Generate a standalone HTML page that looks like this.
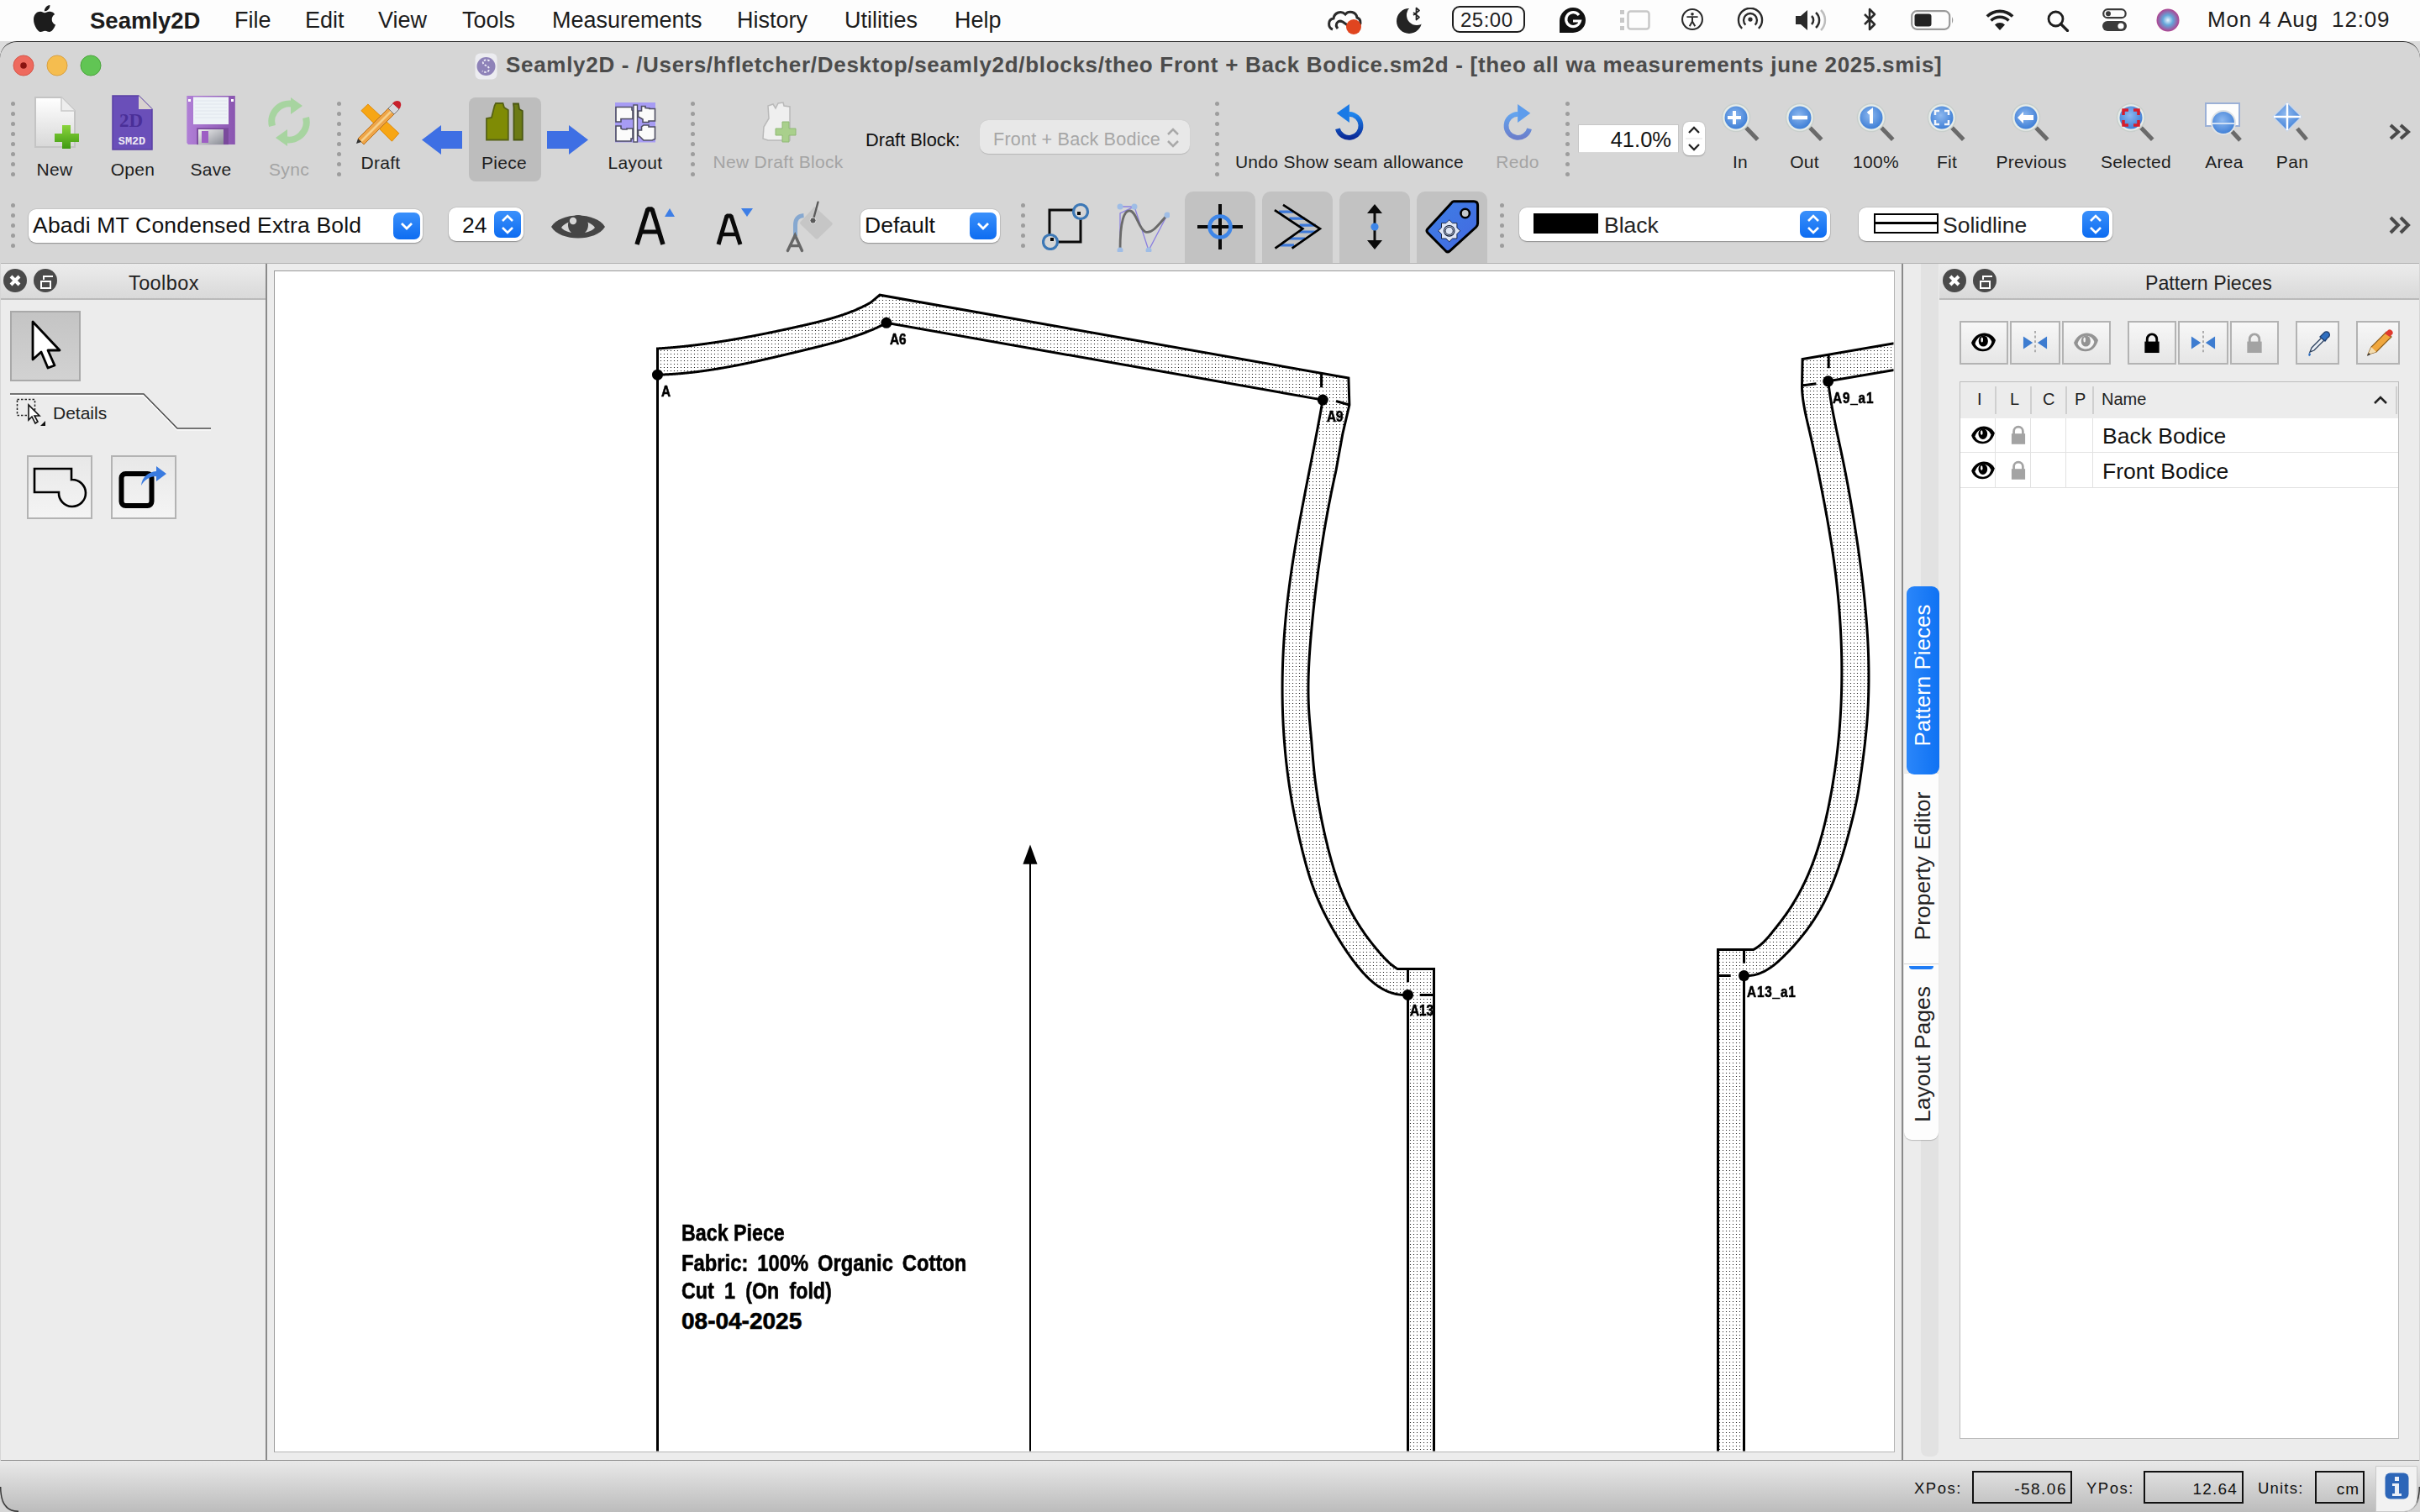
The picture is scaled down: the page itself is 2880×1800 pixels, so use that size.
<!DOCTYPE html>
<html><head><meta charset="utf-8">
<style>
*{box-sizing:border-box;margin:0;padding:0}
html,body{width:2880px;height:1800px;overflow:hidden;background:#dcdcdc;font-family:"Liberation Sans",sans-serif;color:#222;position:relative}
.a{position:absolute}
.t{position:absolute;white-space:nowrap;line-height:1}
.sep{position:absolute;width:5px}
.sep i{display:block;width:5px;height:5px;border-radius:50%;background:#9d9d9d;margin-bottom:7px}
.lbl{position:absolute;font-size:21px;color:#1e1e1e;white-space:nowrap;line-height:1;transform:translateX(-50%);letter-spacing:0.3px}
.combo{position:absolute;background:#fff;border-radius:9px;box-shadow:0 1px 1.5px rgba(0,0,0,.28),0 0 0 0.7px rgba(0,0,0,.10)}
.bbtn{position:absolute;border-radius:7px;background:linear-gradient(#3a90fb,#0d6cf1)}
.tog{position:absolute;background:#c2c2c2;border-radius:10px 10px 0 0}
.pbtn{position:absolute;border:2px solid #b3b3b3;background:linear-gradient(#f7f7f7,#e6e6e6)}
</style></head><body>
<!-- menubar -->
<div class="a" style="left:0;top:0;width:2880px;height:49px;background:#fdfdfd"></div>
<!-- window -->
<div class="a" style="left:0;top:49px;width:2880px;height:1751px;background:#d6d6d6;border-radius:20px 20px 0 0;border-top:1.5px solid #2a2a2a"></div>
<div class="a" style="left:1px;top:313px;width:2878px;height:1px;background:#b2b2b2"></div>
<div class="a" style="left:1px;top:314px;width:2878px;height:1424px;background:#ececec"></div>
<div class="a" style="left:1px;top:1738px;width:2878px;height:1px;background:#8e8e8e"></div>
<div class="a" style="left:0px;top:1739px;width:2880px;height:61px;background:linear-gradient(#e9e9e9,#bcbcbc);border-radius:0 0 20px 20px"></div>
<svg class="a" style="left:0;top:1770px" width="2880" height="30"><path d="M0.7 0 Q0.7 29.3 22 29.3" fill="none" stroke="#333" stroke-width="1.4"/><path d="M2879.3 0 Q2879.3 29.3 2858 29.3" fill="none" stroke="#333" stroke-width="1.4"/></svg>
<!-- menubar content -->
<svg class="a" style="left:40px;top:6px" width="26" height="32" viewBox="0 0 814 1000"><path fill="#1c1c1c" d="M788.1 340.9c-5.8 4.5-108.2 62.2-108.2 190.5 0 148.4 130.3 200.9 134.2 202.2-.6 3.200-20.7 71.9-68.7 141.9-42.8 61.6-87.5 123.1-155.5 123.1s-85.5-39.5-164-39.5c-76.5 0-103.7 40.8-165.9 40.8s-105.6-57-155.5-127C46.7 790.7 0 663 0 541.8c0-194.4 126.4-297.5 250.8-297.5 66.1 0 121.2 43.4 162.700 43.4 39.5 0 101.1-46 176.3-46 28.5 0 130.9 2.6 198.3 99.2zm-234-181.5c31.1-36.9 53.1-88.1 53.1-139.3 0-7.100-.6-14.3-1.9-20.1-50.6 1.9-110.8 33.7-147.1 75.8-28.5 32.4-55.1 83.6-55.1 135.5 0 7.8 1.3 15.6 1.9 18.1 3.2.6 8.4 1.3 13.6 1.3 45.4 0 102.5-30.4 135.5-71.3z"/></svg>
<div class="t" style="left:107px;top:10.5px;font-size:27.5px;font-weight:bold;color:#1c1c1c">Seamly2D</div>
<div class="t" style="left:279px;top:10.5px;font-size:27px;color:#1c1c1c">File</div>
<div class="t" style="left:363px;top:10.5px;font-size:27px;color:#1c1c1c">Edit</div>
<div class="t" style="left:450px;top:10.5px;font-size:27px;color:#1c1c1c">View</div>
<div class="t" style="left:550px;top:10.5px;font-size:27px;color:#1c1c1c">Tools</div>
<div class="t" style="left:657px;top:10.5px;font-size:27px;color:#1c1c1c">Measurements</div>
<div class="t" style="left:877px;top:10.5px;font-size:27px;color:#1c1c1c">History</div>
<div class="t" style="left:1005px;top:10.5px;font-size:27px;color:#1c1c1c">Utilities</div>
<div class="t" style="left:1136px;top:10.5px;font-size:27px;color:#1c1c1c">Help</div>
<!-- status icons -->
<svg class="a" style="left:1578px;top:7px" width="46" height="36" viewBox="0 0 46 36">
 <path d="M8 28 C2 26 2 16 9 15 C10 8 18 5 23 10 C27 5 36 7 37 14 C41 15 42 20 40 23" fill="none" stroke="#2a2a2a" stroke-width="3"/>
 <path d="M14 27 C10 22 14 16 20 19 L30 26" fill="none" stroke="#2a2a2a" stroke-width="3"/>
 <circle cx="33" cy="25" r="9" fill="#e0451f"/>
</svg>
<svg class="a" style="left:1661px;top:7px" width="34" height="34" viewBox="0 0 34 34">
 <defs><mask id="moonm"><rect width="34" height="34" fill="#fff"/><circle cx="25" cy="11" r="12" fill="#000"/></mask></defs>
 <circle cx="16" cy="18" r="15" fill="#242424" mask="url(#moonm)"/>
 <path d="M21 8 L28 13.5 L24.5 16.5 V2.5 L28 5.5 L21 11" fill="none" stroke="#242424" stroke-width="1.7" stroke-linejoin="round"/>
</svg>
<div class="a" style="left:1728px;top:7px;width:87px;height:32px;border:2px solid #1e1e1e;border-radius:9px"></div>
<div class="t" style="left:1738px;top:12px;font-size:24px;color:#1e1e1e;letter-spacing:0.5px">25:00</div>
<svg class="a" style="left:1855px;top:8px" width="34" height="32" viewBox="0 0 34 32">
 <path d="M17 1 A15 15 0 1 1 17 31 L1 31 L1 17 A16 16 0 0 1 17 1Z" fill="#111"/>
 <path d="M24 10 A8.5 8.5 0 1 0 25.5 17 H17" fill="none" stroke="#fff" stroke-width="3.2"/>
</svg>
<svg class="a" style="left:1928px;top:12px" width="36" height="24" viewBox="0 0 36 24">
 <rect x="0" y="0" width="5" height="5" fill="#c8c8c8"/><rect x="0" y="9" width="5" height="6" fill="#c8c8c8"/><rect x="0" y="19" width="5" height="5" fill="#c8c8c8"/>
 <rect x="9.5" y="1.5" width="25" height="21" rx="3" fill="none" stroke="#c8c8c8" stroke-width="2.5"/>
</svg>
<svg class="a" style="left:1997px;top:9px" width="34" height="28" viewBox="0 0 34 34">
 <circle cx="17" cy="17" r="14.5" fill="none" stroke="#2a2a2a" stroke-width="2.5"/>
 <circle cx="17" cy="9.5" r="2.2" fill="#2a2a2a"/>
 <path d="M9 13.5 L25 13.5 M17 13.5 V20 L13 27 M17 20 L21 27" fill="none" stroke="#2a2a2a" stroke-width="2.4"/>
</svg>
<svg class="a" style="left:2067px;top:9px" width="32" height="30" viewBox="0 0 32 32">
 <circle cx="16" cy="15" r="2.8" fill="#2a2a2a"/>
 <path d="M10 22 A8.5 8.5 0 1 1 22 22" fill="none" stroke="#2a2a2a" stroke-width="2.5"/>
 <path d="M5.5 26.5 A15 15 0 1 1 26.5 26.5" fill="none" stroke="#2a2a2a" stroke-width="2.5"/>
</svg>
<svg class="a" style="left:2136px;top:11px" width="40" height="26" viewBox="0 0 40 26">
 <path d="M1 8 H7 L15 1 V25 L7 18 H1 Z" fill="#2a2a2a"/>
 <path d="M20 8 A7 7 0 0 1 20 18" fill="none" stroke="#2a2a2a" stroke-width="2.5"/>
 <path d="M25 4 A12 12 0 0 1 25 22" fill="none" stroke="#2a2a2a" stroke-width="2.5"/>
 <path d="M31 1 A17 17 0 0 1 31 25" fill="none" stroke="#bdbdbd" stroke-width="2.5"/>
</svg>
<svg class="a" style="left:2216px;top:9px" width="19" height="30" viewBox="0 0 19 30">
 <path d="M3 8 L15 20 L9 26 V2 L15 8 L3 20" fill="none" stroke="#2a2a2a" stroke-width="2.5" stroke-linejoin="round"/>
</svg>
<svg class="a" style="left:2274px;top:12px" width="52" height="24" viewBox="0 0 52 24">
 <rect x="1.2" y="1.2" width="45" height="21.6" rx="6" fill="none" stroke="#9a9a9a" stroke-width="2.2"/>
 <rect x="4.5" y="4.5" width="20" height="15" rx="3" fill="#222"/>
 <path d="M49 8 Q51.5 12 49 16 Z" fill="#9a9a9a"/>
</svg>
<svg class="a" style="left:2363px;top:11px" width="34" height="26" viewBox="0 0 34 26">
 <path d="M17 25 L11 18.5 A8.5 8.5 0 0 1 23 18.5 Z" fill="#1e1e1e"/>
 <path d="M6.5 13.5 A15 15 0 0 1 27.5 13.5" fill="none" stroke="#1e1e1e" stroke-width="3.6"/>
 <path d="M1.8 8.5 A22 22 0 0 1 32.2 8.5" fill="none" stroke="#1e1e1e" stroke-width="3.6"/>
</svg>
<svg class="a" style="left:2436px;top:12px" width="27" height="26" viewBox="0 0 27 26">
 <circle cx="10.5" cy="10.5" r="8.5" fill="none" stroke="#1e1e1e" stroke-width="2.8"/>
 <path d="M16.5 16.5 L24.5 24.5" stroke="#1e1e1e" stroke-width="3.2" stroke-linecap="round"/>
</svg>
<svg class="a" style="left:2502px;top:10px" width="29" height="27" viewBox="0 0 29 27">
 <rect x="1.2" y="1.2" width="26.5" height="10" rx="5" fill="none" stroke="#3a3a3a" stroke-width="2.2"/>
 <circle cx="7" cy="6.2" r="3" fill="#3a3a3a"/>
 <rect x="0" y="15" width="29" height="12" rx="6" fill="#3a3a3a"/>
 <circle cx="22" cy="21" r="3.6" fill="#fff"/>
</svg>
<svg class="a" style="left:2566px;top:10px" width="28" height="28" viewBox="0 0 28 28">
 <defs><radialGradient id="siri" cx="50%" cy="50%" r="50%"><stop offset="0" stop-color="#e8f3ff"/><stop offset="0.45" stop-color="#63a6d9"/><stop offset="1" stop-color="#b0418f"/></radialGradient></defs>
 <circle cx="14" cy="14" r="13.5" fill="url(#siri)"/>
</svg>
<div class="t" style="left:2627px;top:10px;font-size:26px;color:#1c1c1c;letter-spacing:0.85px">Mon 4 Aug&nbsp;&nbsp;12:09</div>
<!-- title bar -->
<svg class="a" style="left:14px;top:64px" width="110" height="28" viewBox="0 0 110 28">
 <circle cx="14" cy="14" r="12" fill="#ee6a5e" stroke="#d65548" stroke-width="1"/>
 <circle cx="14" cy="14" r="3.8" fill="#8a1410"/>
 <circle cx="54" cy="14" r="12" fill="#f5bd4f" stroke="#d9a040" stroke-width="1"/>
 <circle cx="94" cy="14" r="12" fill="#61c554" stroke="#4aa43c" stroke-width="1"/>
</svg>
<svg class="a" style="left:565px;top:63px" width="27" height="32" viewBox="0 0 27 32">
 <rect x="0.5" y="0.5" width="26" height="31" rx="6" fill="#ececf0"/>
 <circle cx="13.5" cy="16" r="11" fill="#8e82b8"/>
 <path d="M17.5 9.5 C14 7 8.5 9 10 12.5 C11.5 15.5 17 15 17 19.5 C17 23 11.5 24 9 21.5" fill="none" stroke="#f0eef8" stroke-width="1.8" stroke-dasharray="2.5 1.8"/>
</svg>
<div class="t" style="left:602px;top:64px;font-size:26px;font-weight:bold;color:#4b4b4b;letter-spacing:0.7px">Seamly2D - /Users/hfletcher/Desktop/seamly2d/blocks/theo Front + Back Bodice.sm2d - [theo all wa measurements june 2025.smis]</div>
<!-- toolbar row 1 -->
<svg width="0" height="0" style="position:absolute">
 <defs>
  <radialGradient id="lensg" cx="45%" cy="40%" r="60%"><stop offset="0" stop-color="#8db8ef"/><stop offset="1" stop-color="#3f7fd6"/></radialGradient>
  <linearGradient id="docg" x1="0" y1="0" x2="0" y2="1"><stop offset="0" stop-color="#ffffff"/><stop offset="1" stop-color="#d8d8d8"/></linearGradient>
  <linearGradient id="greeng" x1="0" y1="0" x2="0" y2="1"><stop offset="0" stop-color="#8ad43c"/><stop offset="1" stop-color="#3f9a12"/></linearGradient>
  <symbol id="mag" viewBox="0 0 50 50">
   <path d="M30 30 L42 42.5" stroke="#6a6a6a" stroke-width="5" stroke-linecap="square"/>
   <circle cx="18" cy="18" r="16.5" fill="#e6ece9" stroke="#c9cfcc" stroke-width="1.5"/>
   <circle cx="18" cy="18" r="13.5" fill="url(#lensg)"/>
  </symbol>
 </defs>
</svg>
<div class="sep" style="left:13px;top:121px"><i></i><i></i><i></i><i></i><i></i><i></i><i></i><i></i></div>
<svg class="a" style="left:40px;top:114px" width="56" height="64" viewBox="0 0 56 64">
 <path d="M2 2 H33 L49 18 V61 H2 Z" fill="url(#docg)" stroke="#c4c4c4" stroke-width="2"/>
 <path d="M33 2 V18 H49" fill="#eee" stroke="#c9c9c9" stroke-width="1.5"/>
 <path d="M34 35 H44 V45 H54 V55 H44 V63 H34 V55 H25 V45 H34 Z" fill="url(#greeng)"/>
</svg>
<div class="lbl" style="left:65px;top:190.5px">New</div>
<svg class="a" style="left:133px;top:113px" width="50" height="66" viewBox="0 0 50 66">
 <path d="M1 1 H32 L48 17 V65 H1 Z" fill="#6a4fb9" stroke="#5a40a4" stroke-width="1.5"/>
 <path d="M32 1 L48 17 H32 Z" fill="#d9d2cf"/>
 <text x="23" y="38" font-family="Liberation Serif" font-weight="bold" font-size="23" fill="#4a2f98" text-anchor="middle">2D</text>
 <text x="24" y="59" font-family="Liberation Mono" font-weight="bold" font-size="13.5" fill="#ece8f4" text-anchor="middle">SM2D</text>
</svg>
<div class="lbl" style="left:158px;top:190.5px">Open</div>
<svg class="a" style="left:215px;top:108px" width="70" height="70" viewBox="215 108 70 70">
 <defs><linearGradient id="saveg" x1="0" y1="0" x2="1" y2="0"><stop offset="0" stop-color="#b07fd6"/><stop offset="1" stop-color="#8a55b0"/></linearGradient>
 <linearGradient id="metalg" x1="0" y1="0" x2="1" y2="1"><stop offset="0" stop-color="#f0f0f0"/><stop offset="1" stop-color="#8a8d96"/></linearGradient></defs>
 <path d="M222.3 114 H279.8 V172.1 H224 L222.3 170 Z" fill="url(#saveg)"/>
 <rect x="230" y="115.5" width="42" height="32.5" fill="#eef3f7"/>
 <path d="M232 120 H270 M232 124 H270 M232 128 H270 M232 132 H270 M232 136 H270 M232 140 H270" stroke="#dfe6ee" stroke-width="1.2"/>
 <rect x="234.2" y="152.3" width="37.7" height="19.8" fill="#7a4a9c"/>
 <rect x="236" y="154" width="30" height="18" fill="url(#metalg)"/>
 <rect x="240" y="156" width="8" height="14" fill="#9d5ec4"/>
 <rect x="224" y="118" width="3" height="3" fill="#fff"/><rect x="275" y="118" width="3" height="3" fill="#fff"/>
</svg>
<div class="lbl" style="left:251px;top:190.5px">Save</div>
<svg class="a" style="left:316px;top:114px" width="56" height="62" viewBox="0 0 56 62">
 <path d="M8 36 A21 21 0 0 1 36 11" fill="none" stroke="#a7d4a0" stroke-width="8"/>
 <path d="M30 2 L44 12 L30 22 Z" fill="#a7d4a0"/>
 <path d="M48 26 A21 21 0 0 1 20 51" fill="none" stroke="#a7d4a0" stroke-width="8"/>
 <path d="M26 40 L12 50 L26 60 Z" fill="#a7d4a0"/>
</svg>
<div class="lbl" style="left:344px;top:190.5px;color:#a4a4a4">Sync</div>
<div class="sep" style="left:401px;top:121px"><i></i><i></i><i></i><i></i><i></i><i></i><i></i><i></i></div>
<svg class="a" style="left:420px;top:115px" width="70" height="60" viewBox="420 115 70 60">
 <path d="M429.9 131.7 L437.9 124.1 L474.8 158.7 L466.4 168.2 Z" fill="#f7a614" stroke="#e08a0a" stroke-width="1"/>
 <path d="M426 165 L464 127 L471 134 L433 172 Z" fill="#eea447" stroke="#b8731f" stroke-width="1"/>
 <path d="M430 168 L467 131" stroke="#f8d08a" stroke-width="2.5"/>
 <path d="M462 129 L468 123 L475 130 L469 136 Z" fill="#d8d8dc" stroke="#777" stroke-width="1"/>
 <path d="M467 123 Q471 118 476 121 Q479 125 475 130 Z" fill="#c8202c"/>
 <path d="M426 165 L424 171 L430 169 Z" fill="#333"/>
</svg>
<div class="lbl" style="left:453px;top:182.5px">Draft</div>
<svg class="a" style="left:502px;top:149px" width="49" height="35" viewBox="0 0 49 35">
 <path d="M0 17.5 L23 0 V7 H48 V28 H23 V35 Z" fill="#3e6fe4"/>
</svg>
<div class="a" style="left:558px;top:116px;width:86px;height:100px;background:#bdbdbd;border-radius:8px"></div>
<svg class="a" style="left:570px;top:115px" width="65" height="60" viewBox="570 115 65 60">
 <path d="M579 166.5 V141 L585 140 L588.5 126 L590 123 H598.5 L600 128 L604.8 131 V166.5 Z" fill="#7f8b05" stroke="#566215" stroke-width="1.8"/>
 <path d="M611.5 166.5 V128 L611 123.5 H617 L618 130 L621.8 132 V166.5 Z" fill="#6b7a15" stroke="#4a5712" stroke-width="1.8"/>
</svg>
<div class="lbl" style="left:600px;top:182.5px">Piece</div>
<svg class="a" style="left:651px;top:149px" width="49" height="35" viewBox="0 0 49 35">
 <path d="M49 17.5 L26 0 V7 H0 V28 H26 V35 Z" fill="#3e6fe4"/>
</svg>
<svg class="a" style="left:725px;top:115px" width="65" height="60" viewBox="725 115 65 60">
 <rect x="732" y="122" width="48" height="47.5" fill="#a79cf4"/>
 <path d="M733 127.5 H752 V131 L753 132 V141.5 H739 V145 H733 Z" fill="#fbfbfb" stroke="#4f4f62" stroke-width="1.6"/>
 <path d="M733 150 H739 V153 L741 154 H746 V153 H753 V165 H751 V168 H733 Z" fill="#fbfbfb" stroke="#4f4f62" stroke-width="1.6"/>
 <rect x="754" y="125" width="4.5" height="44" fill="#fbfbfb" stroke="#4f4f62" stroke-width="1.4"/>
 <path d="M759.5 132 H763.5 V126.5 H768 V128.5 L773 129 V129.5 H779.5 V144 H772 V145.5 H765 V142 L761.5 140 L759.5 139 Z" fill="#fbfbfb" stroke="#4f4f62" stroke-width="1.6"/>
 <path d="M759.5 155 H763.5 V151 L766 149 H772 V151 H779.5 V165.5 L776 167 H766 L762 163 L759.5 161 Z" fill="#fbfbfb" stroke="#4f4f62" stroke-width="1.6"/>
</svg>
<div class="lbl" style="left:756px;top:182.5px">Layout</div>
<div class="sep" style="left:822px;top:121px"><i></i><i></i><i></i><i></i><i></i><i></i><i></i><i></i></div>
<svg class="a" style="left:906px;top:121px" width="46" height="50" viewBox="0 0 46 50">
 <path d="M8 46 L2 44 L3 30 L9 20 L8 5 L14 3 L17 8 L20 2 L26 1 L27 5 L34 6 L34 46 Z" fill="#efefef" stroke="#b9b9b9" stroke-width="1.5"/>
 <path d="M25 24 H33 V32 H41 V40 H33 V48 H25 V40 H17 V32 H25 Z" fill="#a9d08c" stroke="#8fb874" stroke-width="1"/>
</svg>
<div class="lbl" style="left:926px;top:182px;color:#a4a4a4">New Draft Block</div>
<div class="t" style="left:1030px;top:156px;font-size:21.8px;color:#111">Draft Block:</div>
<div class="a" style="left:1166px;top:143px;width:250px;height:40px;background:#e8e8e8;border-radius:10px;box-shadow:0 0.5px 1px rgba(0,0,0,.15)"></div>
<div class="t" style="left:1182px;top:155px;font-size:21.6px;color:#a6a6a6;letter-spacing:0.2px">Front + Back Bodice</div>
<svg class="a" style="left:1388px;top:151px" width="16" height="26" viewBox="0 0 16 26"><path d="M2 9 L8 3 L14 9 M2 17 L8 23 L14 17" fill="none" stroke="#a9a9a9" stroke-width="2.5"/></svg>
<div class="sep" style="left:1446px;top:121px"><i></i><i></i><i></i><i></i><i></i><i></i><i></i><i></i></div>
<svg class="a" style="left:1586px;top:123px" width="40" height="46" viewBox="0 0 40 46">
 <defs><linearGradient id="undog" x1="0" y1="0" x2="0" y2="1"><stop offset="0" stop-color="#1f86ee"/><stop offset="1" stop-color="#0a2a98"/></linearGradient></defs>
 <path d="M19.7 12.8 A14 14 0 1 1 5.9 30.2" fill="none" stroke="url(#undog)" stroke-width="5.8"/>
 <path d="M4.7 11.8 L19.9 1 V22.9 Z" fill="#1a7ae6"/>
</svg>
<div class="lbl" style="left:1606px;top:182px">Undo Show seam allowance</div>
<svg class="a" style="left:1786px;top:123px" width="40" height="46" viewBox="0 0 40 46">
 <defs><linearGradient id="redog" x1="0" y1="0" x2="0" y2="1"><stop offset="0" stop-color="#64a4ee"/><stop offset="1" stop-color="#6b7fcc"/></linearGradient></defs>
 <path d="M20.3 12.8 A14 14 0 1 0 34.1 30.2" fill="none" stroke="url(#redog)" stroke-width="5.8"/>
 <path d="M35.3 11.8 L20.1 1 V22.9 Z" fill="#5d9cec"/>
</svg>
<div class="lbl" style="left:1806px;top:182px;color:#a4a4a4">Redo</div>
<div class="sep" style="left:1863px;top:121px"><i></i><i></i><i></i><i></i><i></i><i></i><i></i><i></i></div>
<div class="a" style="left:1878px;top:148px;width:120px;height:34px;background:#fff;border:1px solid #c6c6c6;border-bottom-color:#d9d9d9"></div>
<div class="t" style="left:1890px;top:154px;width:99px;text-align:right;font-size:25.5px;color:#111">41.0%</div>
<div class="a" style="left:2003px;top:145px;width:26px;height:40px;background:#fff;border-radius:7px;box-shadow:0 0.5px 1.5px rgba(0,0,0,.3)"></div>
<svg class="a" style="left:2003px;top:145px" width="26" height="40" viewBox="0 0 26 40"><path d="M7 13 L13 7 L19 13 M7 27 L13 33 L19 27" fill="none" stroke="#222" stroke-width="2.3"/><path d="M3 20 H23" stroke="#e3e3e3" stroke-width="1"/></svg>
<!-- magnifiers -->
<svg class="a" style="left:2048px;top:122px" width="50" height="50"><use href="#mag"/><path d="M16 10 V26 M8 18 H24" stroke="#fff" stroke-width="4"/></svg>
<div class="lbl" style="left:2071px;top:181.5px">In</div>
<svg class="a" style="left:2124px;top:122px" width="50" height="50"><use href="#mag"/><path d="M9 18 H27" stroke="#fff" stroke-width="4.5"/></svg>
<div class="lbl" style="left:2147.5px;top:181.5px">Out</div>
<svg class="a" style="left:2209px;top:122px" width="50" height="50"><use href="#mag"/><path d="M14 13 L18 10 V25" fill="none" stroke="#fff" stroke-width="4"/></svg>
<div class="lbl" style="left:2232.5px;top:181.5px">100%</div>
<svg class="a" style="left:2293px;top:122px" width="50" height="50"><use href="#mag"/><path d="M10 15 V10 H15 M21 10 H26 V15 M26 21 V26 H21 M15 26 H10 V21" fill="none" stroke="#f4f7fb" stroke-width="2.5"/></svg>
<div class="lbl" style="left:2317px;top:181.5px">Fit</div>
<svg class="a" style="left:2393px;top:122px" width="50" height="50"><use href="#mag"/><path d="M8 18 L15 11 V15 H27 V21 H15 V25 Z" fill="#fff"/></svg>
<div class="lbl" style="left:2417.5px;top:181.5px">Previous</div>
<svg class="a" style="left:2518px;top:122px" width="50" height="50"><use href="#mag"/><path d="M9 15 V9 H15 M21 9 H27 V15 M27 21 V27 H21 M15 27 H9 V21" fill="none" stroke="#d81c2a" stroke-width="3.5"/></svg>
<div class="lbl" style="left:2542px;top:181.5px">Selected</div>
<svg class="a" style="left:2622px;top:120px" width="50" height="54" viewBox="0 0 50 54">
 <rect x="3" y="3" width="40" height="27" fill="#fdfdfd" stroke="#9bb0d6" stroke-width="2"/>
 <path d="M33 35 L44 47" stroke="#6a6a6a" stroke-width="5"/>
 <circle cx="24" cy="26" r="14" fill="url(#lensg)" stroke="#dfe3e6" stroke-width="2"/>
 <path d="M11 27 H37" stroke="#cfe0f6" stroke-width="2"/>
</svg>
<div class="lbl" style="left:2647px;top:181.5px">Area</div>
<svg class="a" style="left:2700px;top:120px" width="52" height="54" viewBox="0 0 52 54">
 <path d="M34 33 L45 46" stroke="#6a6a6a" stroke-width="5"/>
 <path d="M22 2 L39 19 L22 36 L5 19 Z" fill="url(#lensg)" stroke="#c8d6ea" stroke-width="1.5"/>
 <path d="M22 3 V35 M6 19 H38" stroke="#fff" stroke-width="2.5"/>
</svg>
<div class="lbl" style="left:2728px;top:181.5px">Pan</div>
<svg class="a" style="left:2843px;top:147px" width="30" height="20" viewBox="0 0 30 20"><path d="M2 2 L11 10 L2 18 M14 2 L23 10 L14 18" fill="none" stroke="#4a4a4a" stroke-width="4"/></svg>
<!-- toolbar row 2 -->
<div class="sep" style="left:13px;top:242px"><i></i><i></i><i></i><i></i><i></i></div>
<div class="combo" style="left:34px;top:249px;width:469px;height:40px"></div>
<div class="t" style="left:39px;top:255px;font-size:26.5px;color:#111;letter-spacing:0.2px">Abadi MT Condensed Extra Bold</div>
<div class="bbtn" style="left:468px;top:253px;width:32px;height:32px"></div>
<svg class="a" style="left:468px;top:253px" width="32" height="32" viewBox="0 0 32 32"><path d="M10 13 L16 19 L22 13" fill="none" stroke="#fff" stroke-width="2.8"/></svg>
<div class="combo" style="left:534px;top:247px;width:89px;height:40px"></div>
<div class="t" style="left:550px;top:255px;font-size:26.5px;color:#111">24</div>
<div class="bbtn" style="left:588px;top:251px;width:32px;height:32px"></div>
<svg class="a" style="left:588px;top:251px" width="32" height="32" viewBox="0 0 32 32"><path d="M10 12 L16 6 L22 12 M10 20 L16 26 L22 20" fill="none" stroke="#fff" stroke-width="2.6"/></svg>
<svg class="a" style="left:655px;top:249px" width="66" height="42" viewBox="0 0 66 42">
 <path d="M1 21 C12 3 54 3 65 21 C54 39 12 39 1 21 Z" fill="#454545"/>
 <path d="M13 22 C20 11 46 11 53 22 C46 31 20 31 13 22Z" fill="#d6d6d6"/>
 <circle cx="33" cy="19" r="12" fill="#454545"/>
 <circle cx="27" cy="14" r="4.2" fill="#d6d6d6"/>
</svg>
<svg class="a" style="left:754px;top:246px" width="52" height="48" viewBox="0 0 52 48">
 <path d="M4 45 L17 3 H22 L35 45" fill="none" stroke="#0a0a0a" stroke-width="5.5" stroke-linejoin="bevel"/>
 <path d="M9 30 H30" stroke="#0a0a0a" stroke-width="5"/>
 <path d="M37 12 L43 2 L49 12 Z" fill="#3d7ee6"/>
</svg>
<svg class="a" style="left:852px;top:245px" width="48" height="49" viewBox="0 0 48 49">
 <path d="M3 46 L13 12 H18 L29 46" fill="none" stroke="#0a0a0a" stroke-width="5" stroke-linejoin="bevel"/>
 <path d="M7 34 H25" stroke="#0a0a0a" stroke-width="4.5"/>
 <path d="M30 3 H44 L37 13 Z" fill="#3d7ee6"/>
</svg>
<svg class="a" style="left:930px;top:236px" width="70" height="70" viewBox="930 236 70 70">
 <path d="M968.4 247 Q968.4 245.3 970 246.5 L990 265 Q991.6 266.6 990 268 L973.5 284 Q972.1 285.5 970.5 284 L952.8 267 Q951.3 265.6 952.8 264 Z" fill="#c6c6c6"/>
 <path d="M956.5 256.5 C950 257 946.5 260 946.5 268 V281" fill="none" stroke="#86a8d0" stroke-width="5"/>
 <path d="M973.5 240.6 L967.5 262.9" stroke="#5a5a5a" stroke-width="2.3" stroke-linecap="round"/>
 <circle cx="967.5" cy="262.5" r="3.6" fill="#5a5a5a" stroke="#e4e4e4" stroke-width="1"/>
 <path d="M937.4 298.5 L946.2 280 L954.5 298.5 M940.5 292.6 H951.5" fill="none" stroke="#676767" stroke-width="3.4" stroke-linecap="round"/>
</svg>
<div class="combo" style="left:1024px;top:249px;width:166px;height:40px"></div>
<div class="t" style="left:1029px;top:255px;font-size:26.5px;color:#111">Default</div>
<div class="bbtn" style="left:1154px;top:253px;width:32px;height:32px"></div>
<svg class="a" style="left:1154px;top:253px" width="32" height="32" viewBox="0 0 32 32"><path d="M10 13 L16 19 L22 13" fill="none" stroke="#fff" stroke-width="2.8"/></svg>
<div class="sep" style="left:1215px;top:242px"><i></i><i></i><i></i><i></i><i></i></div>
<svg class="a" style="left:1240px;top:242px" width="58" height="56" viewBox="0 0 58 56">
 <path d="M9 47 V8 H46 V46 H10" fill="none" stroke="#0a0a0a" stroke-width="3"/>
 <circle cx="46" cy="10" r="8.5" fill="#d6d6d6" stroke="#3d78b6" stroke-width="3.2"/>
 <circle cx="10" cy="46" r="8.5" fill="#d6d6d6" stroke="#3d78b6" stroke-width="3.2"/>
 <rect x="42" y="10" width="4" height="4" fill="#0a0a0a"/><rect x="10" y="41" width="4" height="4" fill="#0a0a0a"/>
</svg>
<svg class="a" style="left:1328px;top:242px" width="64" height="58" viewBox="0 0 64 58">
 <path d="M5 56 V12 L22 4 L39 56 L61 14" fill="none" stroke="#8a7fe0" stroke-width="1.3"/>
 <path d="M5 4 H22" stroke="#8a7fe0" stroke-width="1.5"/>
 <path d="M5 56 C5 20 10 8 17 9 C24 10 27 30 35 34 C43 37 51 25 61 14" fill="none" stroke="#6a6a6a" stroke-width="2.8"/>
 <circle cx="5" cy="4" r="3.5" fill="#9fbde6"/><circle cx="22" cy="4" r="3.5" fill="#9fbde6"/>
 <circle cx="5" cy="56" r="3.5" fill="#9fbde6"/><circle cx="39" cy="56" r="3.5" fill="#9fbde6"/><circle cx="61" cy="14" r="3.5" fill="#9fbde6"/>
</svg>
<div class="tog" style="left:1410px;top:228px;width:84px;height:85px"></div>
<div class="tog" style="left:1502px;top:228px;width:84px;height:85px"></div>
<div class="tog" style="left:1594px;top:228px;width:84px;height:85px"></div>
<div class="tog" style="left:1686px;top:228px;width:84px;height:85px"></div>
<svg class="a" style="left:1422px;top:240px" width="60" height="60" viewBox="0 0 60 60">
 <path d="M30 3 V57 M3 30 H57" stroke="#0a0a0a" stroke-width="4"/>
 <circle cx="30" cy="30" r="12.5" fill="none" stroke="#3e86e8" stroke-width="4.5"/>
</svg>
<svg class="a" style="left:1500px;top:230px" width="90" height="80" viewBox="1500 230 90 80">
 <path d="M1522 252.2 H1539 M1534.5 260.2 H1553 M1546.5 268.1 H1566 M1546 276 H1566 M1534 284 H1553 M1523 291.9 H1540" stroke="#3d78d8" stroke-width="3.2"/>
 <path d="M1516.9 250.1 L1550.3 272.3 L1517.5 295.6" fill="none" stroke="#000" stroke-width="2.7"/>
 <path d="M1527 243.8 L1570.9 272.3 L1537.6 295.6" fill="none" stroke="#000" stroke-width="2.7"/>
</svg>
<svg class="a" style="left:1622px;top:241px" width="28" height="58" viewBox="0 0 28 58">
 <path d="M14 8 V50" stroke="#0a0a0a" stroke-width="3"/>
 <path d="M5 13 L14 2 L23 13 Z M5 45 L14 56 L23 45 Z" fill="#0a0a0a"/>
 <circle cx="14" cy="29" r="4.6" fill="#3e86e8"/>
</svg>
<svg class="a" style="left:1686px;top:226px" width="104" height="90" viewBox="1686 226 104 90">
 <defs><linearGradient id="tagg" x1="0" y1="0" x2="1" y2="1"><stop offset="0" stop-color="#3d7fe6"/><stop offset="1" stop-color="#4468e0"/></linearGradient></defs>
 <path d="M1730 239.7 L1754 239.7 Q1758.6 239.7 1758.6 244.5 L1758.6 266 Q1758.6 268.5 1756.5 270.5 L1725 299 Q1722.9 300.8 1720.8 299 L1699 277 Q1697 274.8 1699 272.6 L1727 242 Q1728.5 239.7 1730 239.7 Z" fill="url(#tagg)" stroke="#000" stroke-width="3"/>
 <circle cx="1743.7" cy="254" r="5.2" fill="#c4c8cc" stroke="#000" stroke-width="2.6"/>
 <path d="M1724.7 261.8 L1728.5 265.6 L1733.9 265.6 L1733.9 271.0 L1737.7 274.8 L1733.9 278.6 L1733.9 284.0 L1728.5 284.0 L1724.7 287.8 L1720.9 284.0 L1715.5 284.0 L1715.5 278.6 L1711.7 274.8 L1715.5 271.0 L1715.5 265.6 L1720.9 265.6 Z" fill="#dfe6f6" stroke="#0d1a35" stroke-width="0.9" stroke-linejoin="round"/>
 <circle cx="1724.7" cy="274.8" r="6.3" fill="none" stroke="#0d1a35" stroke-width="1.1"/>
 <circle cx="1724.7" cy="274.8" r="4.6" fill="#dfe6f6" stroke="#0d1a35" stroke-width="1"/>
</svg>
<div class="sep" style="left:1785px;top:242px"><i></i><i></i><i></i><i></i><i></i></div>
<div class="combo" style="left:1808px;top:247px;width:370px;height:40px"></div>
<div class="a" style="left:1825px;top:254px;width:77px;height:24px;background:#000"></div>
<div class="t" style="left:1909px;top:255px;font-size:26.5px;color:#222">Black</div>
<div class="bbtn" style="left:2142px;top:251px;width:32px;height:32px"></div>
<svg class="a" style="left:2142px;top:251px" width="32" height="32" viewBox="0 0 32 32"><path d="M10 12 L16 6 L22 12 M10 20 L16 26 L22 20" fill="none" stroke="#fff" stroke-width="2.6"/></svg>
<div class="combo" style="left:2212px;top:247px;width:302px;height:40px"></div>
<div class="a" style="left:2230px;top:254px;width:77px;height:24px;border:2px solid #000;background:#fff"></div>
<div class="a" style="left:2230px;top:264px;width:77px;height:3px;background:#000"></div>
<div class="t" style="left:2312px;top:255px;font-size:26.5px;color:#222">Solidline</div>
<div class="bbtn" style="left:2478px;top:251px;width:32px;height:32px"></div>
<svg class="a" style="left:2478px;top:251px" width="32" height="32" viewBox="0 0 32 32"><path d="M10 12 L16 6 L22 12 M10 20 L16 26 L22 20" fill="none" stroke="#fff" stroke-width="2.6"/></svg>
<svg class="a" style="left:2843px;top:257px" width="30" height="22" viewBox="0 0 30 22"><path d="M2 2 L11 11 L2 20 M14 2 L23 11 L14 20" fill="none" stroke="#4a4a4a" stroke-width="4"/></svg>
<!-- left toolbox -->
<div class="a" style="left:1px;top:314px;width:315px;height:43px;background:linear-gradient(#ececec,#d9d9d9);border-bottom:2.5px solid #bababa"></div>
<svg class="a" style="left:3px;top:319px" width="68" height="30" viewBox="0 0 68 30">
 <circle cx="15" cy="15" r="14" fill="#4a4a4a"/>
 <path d="M10 10 L20 20 M20 10 L10 20" stroke="#fff" stroke-width="4"/>
 <circle cx="51" cy="15" r="14" fill="#4a4a4a"/>
 <rect x="46" y="16" width="11" height="8" fill="none" stroke="#fff" stroke-width="2"/>
 <path d="M49 14 V10 H60" fill="none" stroke="#fff" stroke-width="2"/>
</svg>
<div class="t" style="left:153px;top:326px;font-size:23.5px;color:#222;letter-spacing:0.4px">Toolbox</div>
<div class="a" style="left:316px;top:314px;width:2px;height:1424px;background:#8a8a8a"></div>
<div class="a" style="left:12px;top:370px;width:84px;height:84px;border:2px solid #a9a9a9;background:linear-gradient(#c4c4c4,#d2d2d2)"></div>
<svg class="a" style="left:36px;top:380px" width="40" height="62" viewBox="0 0 40 62">
 <path d="M3 3 V48 L13 39 L21 58 L29 55 L21 37 L35 37 Z" fill="#fff" stroke="#000" stroke-width="2.8" stroke-linejoin="round"/>
</svg>
<svg class="a" style="left:10px;top:462px" width="245" height="52" viewBox="0 0 245 52">
 <path d="M2 7 H161 L201 48 H241" fill="none" stroke="#fff" stroke-width="2" transform="translate(0,1.5)"/>
 <path d="M2 7 H161 L201 48 H241" fill="none" stroke="#4a4a4a" stroke-width="1.5"/>
</svg>
<svg class="a" style="left:19px;top:474px" width="36" height="34" viewBox="0 0 36 34">
 <rect x="1.5" y="1.5" width="21" height="19" fill="none" stroke="#222" stroke-width="1.5" stroke-dasharray="2.5 2"/>
 <path d="M15 8 V26 L19 22 L23 30 L26 28 L22 21 L28 21 Z" fill="#fff" stroke="#111" stroke-width="1.6"/>
 <path d="M29 33 L35 27 V33 Z" fill="#111"/>
</svg>
<div class="t" style="left:63px;top:481px;font-size:21px;color:#222">Details</div>
<div class="a" style="left:32px;top:542px;width:78px;height:76px;border:2px solid #b3b3b3;background:linear-gradient(#e8e8e8,#f4f4f4)"></div>
<svg class="a" style="left:32px;top:542px" width="78" height="76" viewBox="0 0 78 76">
 <path d="M9 16 H53 V29 A16 16 0 1 1 38 44 H9 Z" fill="none" stroke="#000" stroke-width="2.6"/>
</svg>
<div class="a" style="left:132px;top:542px;width:78px;height:76px;border:2px solid #b3b3b3;background:linear-gradient(#e8e8e8,#f4f4f4)"></div>
<svg class="a" style="left:132px;top:542px" width="78" height="76" viewBox="0 0 78 76">
 <rect x="12.5" y="22" width="36" height="38" rx="5" fill="none" stroke="#000" stroke-width="6"/>
 <path d="M36 36 C37 26 44 20 54 19 V13 L66 22 L54 31 V25 C46 25 40 29 36 36 Z" fill="#3a7be0"/>
</svg>
<!-- canvas frame -->
<div class="a" style="left:326px;top:322px;width:1929px;height:1407px;background:#fff;border:1.5px solid #9a9a9a;border-right-color:#b5b5b5;border-bottom-color:#b5b5b5"></div>
<!-- right side splitter + tabs -->
<div class="a" style="left:2263px;top:314px;width:2px;height:1424px;background:#8a8a8a"></div>
<div class="a" style="left:2286px;top:314px;width:21px;height:1420px;background:#e2e2e2;border-radius:0 0 8px 8px"></div>
<div class="a" style="left:2266px;top:921px;width:41px;height:436px;background:#fdfdfd;border-radius:0 0 9px 9px;box-shadow:0 0.5px 1px rgba(0,0,0,.2)"></div>
<div class="a" style="left:2269px;top:698px;width:39px;height:224px;background:linear-gradient(90deg,#2a86fa,#0f72f3);border-radius:9px"></div>
<div class="a" style="left:2266px;top:1147px;width:41px;height:1px;background:#d4d4d4"></div>
<div class="a" style="left:2272px;top:1150px;width:29px;height:4px;background:#1f7cf5;border-radius:0 0 4px 4px"></div>
<div class="t" style="left:2288px;top:804px;font-size:26px;color:#fff;transform:translate(-50%,-50%) rotate(-90deg)">Pattern Pieces</div>
<div class="t" style="left:2288px;top:1031px;font-size:26.5px;color:#222;transform:translate(-50%,-50%) rotate(-90deg)">Property Editor</div>
<div class="t" style="left:2288px;top:1255px;font-size:26.5px;color:#222;transform:translate(-50%,-50%) rotate(-90deg)">Layout Pages</div>
<!-- right panel -->
<div class="a" style="left:2308px;top:314px;width:571px;height:43px;background:linear-gradient(#ececec,#d9d9d9);border-bottom:2.5px solid #bababa"></div>
<svg class="a" style="left:2311px;top:319px" width="68" height="30" viewBox="0 0 68 30">
 <circle cx="15" cy="15" r="14" fill="#4a4a4a"/>
 <path d="M10 10 L20 20 M20 10 L10 20" stroke="#fff" stroke-width="4"/>
 <circle cx="51" cy="15" r="14" fill="#4a4a4a"/>
 <rect x="46" y="16" width="11" height="8" fill="none" stroke="#fff" stroke-width="2"/>
 <path d="M49 14 V10 H60" fill="none" stroke="#fff" stroke-width="2"/>
</svg>
<div class="t" style="left:2553px;top:326px;font-size:23.2px;color:#222">Pattern Pieces</div>
<div class="pbtn" style="left:2332px;top:382px;width:58px;height:52px"></div>
<div class="pbtn" style="left:2392px;top:382px;width:60px;height:52px"></div>
<div class="pbtn" style="left:2454px;top:382px;width:58px;height:52px"></div>
<div class="pbtn" style="left:2532px;top:382px;width:58px;height:52px"></div>
<div class="pbtn" style="left:2592px;top:382px;width:60px;height:52px"></div>
<div class="pbtn" style="left:2654px;top:382px;width:58px;height:52px"></div>
<div class="pbtn" style="left:2732px;top:382px;width:52px;height:52px"></div>
<div class="pbtn" style="left:2804px;top:382px;width:52px;height:52px"></div>
<svg width="0" height="0" style="position:absolute"><defs>
 <symbol id="eye" viewBox="0 0 30 23">
  <path d="M0.5 12 C4 4 10 0.5 16 0.5 C22 0.5 27 4 29.5 9 C27 18 21 22.5 14 22.3 C7 22 2.5 18 0.5 12 Z" fill="#000"/>
  <path d="M5 13 C7 7 11 3.8 15 3.8 C20 3.8 23.5 7 24.8 11 C23.5 16.5 19.5 19.5 15 19.5 C10 19.5 6.5 17 5 13 Z" fill="#fff"/>
  <ellipse cx="14.8" cy="10" rx="5.6" ry="6.6" fill="#000"/>
  <ellipse cx="13.2" cy="8.6" rx="1.3" ry="3" fill="#fff"/>
 </symbol>
 <symbol id="lock" viewBox="0 0 20 26">
  <path d="M4 12 V8 A6 6 0 0 1 16 8 V12" fill="none" stroke="currentColor" stroke-width="3"/>
  <rect x="1" y="11" width="18" height="14" fill="currentColor"/>
 </symbol>
 <symbol id="mir" viewBox="0 0 32 32">
  <path d="M1 8 L13 16 L1 24 Z M31 8 L19 16 L31 24 Z" fill="#3d7cd0"/>
  <path d="M16 1 V31" stroke="#a8a8a8" stroke-width="2" stroke-dasharray="3 3"/>
 </symbol>
</defs></svg>
<svg class="a" style="left:2345px;top:396px" width="31" height="23"><use href="#eye"/></svg>
<svg class="a" style="left:2406px;top:393px" width="32" height="30"><use href="#mir"/></svg>
<svg class="a" style="left:2467px;top:396px" width="31" height="23" style="opacity:.4"><g opacity="0.38"><use href="#eye"/></g></svg>
<svg class="a" style="left:2551px;top:396px" width="20" height="25" style="color:#000"><use href="#lock" style="color:#000"/></svg>
<svg class="a" style="left:2606px;top:393px" width="32" height="30"><use href="#mir"/></svg>
<svg class="a" style="left:2673px;top:396px" width="20" height="25"><use href="#lock" style="color:#a3a3a3"/></svg>
<svg class="a" style="left:2744px;top:392px" width="30" height="33" viewBox="0 0 30 33">
 <path d="M7 22 L19 10 L22 13 L10 25 L5 27 Z" fill="#e9eef4" stroke="#2a3f5c" stroke-width="1.3"/>
 <path d="M17 9 L22 4 C24 2 27 3 28 5 C29 7 28 9 26 10 L23 14 Z" fill="#2f6fc0" stroke="#1e3f70" stroke-width="1.3"/>
 <path d="M4 28 C3 30 3 31 4 32 C5 32 6 31 6 29 Z" fill="#2f6fc0"/>
</svg>
<svg class="a" style="left:2814px;top:392px" width="34" height="34" viewBox="0 0 34 34">
 <path d="M4 30 L8 21 L26 3 L32 9 L14 27 Z" fill="#f0a73d" stroke="#8a5c1c" stroke-width="1.2"/>
 <path d="M24 5 L28 1 C29 0 31 0 33 2 C34 4 34 5 33 6 L30 9 Z" fill="#e03a2e"/>
 <path d="M4 30 L8 21 L14 27 Z" fill="#f3dcb0"/>
 <path d="M3 32 L5 28 L7 30 Z" fill="#333"/>
</svg>
<!-- table -->
<div class="a" style="left:2332px;top:454px;width:523px;height:1259px;background:#fff;border:1.5px solid #bdbdbd"></div>
<div class="a" style="left:2333px;top:455px;width:521px;height:43px;background:#ececec"></div>
<div class="a" style="left:2374px;top:460px;width:2px;height:33px;background:#cfcfcf"></div>
<div class="a" style="left:2416px;top:460px;width:2px;height:33px;background:#cfcfcf"></div>
<div class="a" style="left:2458px;top:460px;width:2px;height:33px;background:#cfcfcf"></div>
<div class="a" style="left:2490px;top:460px;width:2px;height:33px;background:#cfcfcf"></div>
<div class="a" style="left:2851px;top:460px;width:2px;height:33px;background:#cfcfcf"></div>
<div class="t" style="left:2353px;top:465px;font-size:20px;color:#222">I</div>
<div class="t" style="left:2392px;top:465px;font-size:20px;color:#222">L</div>
<div class="t" style="left:2431px;top:465px;font-size:20px;color:#222">C</div>
<div class="t" style="left:2469px;top:465px;font-size:20px;color:#222">P</div>
<div class="t" style="left:2501px;top:465px;font-size:20px;color:#222">Name</div>
<svg class="a" style="left:2824px;top:470px" width="18" height="12" viewBox="0 0 18 12"><path d="M2 10 L9 3 L16 10" fill="none" stroke="#222" stroke-width="2.5"/></svg>
<div class="a" style="left:2333px;top:538px;width:521px;height:1px;background:#e2e2e2"></div>
<div class="a" style="left:2333px;top:580px;width:521px;height:1px;background:#e2e2e2"></div>
<div class="a" style="left:2374px;top:498px;width:1px;height:82px;background:#e2e2e2"></div>
<div class="a" style="left:2416px;top:498px;width:1px;height:82px;background:#e2e2e2"></div>
<div class="a" style="left:2458px;top:498px;width:1px;height:82px;background:#e2e2e2"></div>
<div class="a" style="left:2490px;top:498px;width:1px;height:82px;background:#e2e2e2"></div>
<svg class="a" style="left:2345px;top:507px" width="30" height="22"><use href="#eye"/></svg>
<svg class="a" style="left:2393px;top:506px" width="18" height="24"><use href="#lock" style="color:#a3a3a3"/></svg>
<div class="t" style="left:2502px;top:506px;font-size:26.5px;color:#111">Back Bodice</div>
<svg class="a" style="left:2345px;top:549px" width="30" height="22"><use href="#eye"/></svg>
<svg class="a" style="left:2393px;top:548px" width="18" height="24"><use href="#lock" style="color:#a3a3a3"/></svg>
<div class="t" style="left:2502px;top:548px;font-size:26.5px;color:#111">Front Bodice</div>
<!-- status bar -->
<div class="t" style="left:2278px;top:1762.5px;font-size:18.5px;color:#111;letter-spacing:1.5px">XPos:</div>
<div class="a" style="left:2347px;top:1751px;width:119px;height:39px;border:2px solid #111"></div>
<div class="t" style="left:2367px;top:1762.5px;width:93px;text-align:right;font-size:19px;color:#111;letter-spacing:1.5px">-58.06</div>
<div class="t" style="left:2483px;top:1762.5px;font-size:18.5px;color:#111;letter-spacing:1.5px">YPos:</div>
<div class="a" style="left:2551px;top:1751px;width:119px;height:39px;border:2px solid #111"></div>
<div class="t" style="left:2565px;top:1762.5px;width:98px;text-align:right;font-size:19px;color:#111;letter-spacing:1.2px">12.64</div>
<div class="t" style="left:2687px;top:1762.5px;font-size:18.5px;color:#111;letter-spacing:1.2px">Units:</div>
<div class="a" style="left:2755px;top:1751px;width:59px;height:39px;border:2px solid #111"></div>
<div class="t" style="left:2770px;top:1762.5px;width:38px;text-align:right;font-size:19px;color:#111;letter-spacing:1px">cm</div>
<div class="a" style="left:2827px;top:1745px;width:50px;height:55px;background:#f2f2f2;border:1px solid #c9c9c9;border-radius:0 0 16px 0"></div>
<svg class="a" style="left:2838px;top:1753px" width="29" height="32" viewBox="0 0 29 32">
 <rect x="0.5" y="0.5" width="28" height="31" rx="6" fill="#2d66b8"/>
 <rect x="12" y="5" width="5" height="5" fill="#e9eef7"/>
 <path d="M9 13 H17 V25 H20 V28 H9 V25 H12 V16 H9 Z" fill="#e9eef7"/>
</svg>
<div class="t" style="left:787px;top:456.9px;font-size:18px;font-weight:bold;color:#000;transform:scaleX(0.85);transform-origin:0 0;-webkit-text-stroke:0.6px #000;">A</div>
<div class="t" style="left:1059px;top:394.9px;font-size:18px;font-weight:bold;color:#000;transform:scaleX(0.85);transform-origin:0 0;-webkit-text-stroke:0.6px #000;">A6</div>
<div class="t" style="left:1578.5px;top:486.9px;font-size:18px;font-weight:bold;color:#000;transform:scaleX(0.85);transform-origin:0 0;-webkit-text-stroke:0.6px #000;">A9</div>
<div class="t" style="left:1678px;top:1194.4px;font-size:18px;font-weight:bold;color:#000;transform:scaleX(0.85);transform-origin:0 0;-webkit-text-stroke:0.6px #000;">A13</div>
<div class="t" style="left:2181.2px;top:464.6px;font-size:18px;font-weight:bold;color:#000;transform:scaleX(0.85);transform-origin:0 0;-webkit-text-stroke:0.6px #000;letter-spacing:1px">A9_a1</div>
<div class="t" style="left:2079px;top:1171.9px;font-size:18px;font-weight:bold;color:#000;transform:scaleX(0.85);transform-origin:0 0;-webkit-text-stroke:0.6px #000;letter-spacing:1px">A13_a1</div>
<div class="t" style="left:811px;top:1454.2px;font-size:28px;font-weight:bold;color:#000;transform:scaleX(0.83);transform-origin:0 0;-webkit-text-stroke:0.6px #000;">Back Piece</div>
<div class="t" style="left:811px;top:1489.7px;font-size:28px;font-weight:bold;color:#000;transform:scaleX(0.85);transform-origin:0 0;-webkit-text-stroke:0.6px #000;word-spacing:5px">Fabric: 100% Organic Cotton</div>
<div class="t" style="left:811px;top:1523.2px;font-size:28px;font-weight:bold;color:#000;transform:scaleX(0.83);transform-origin:0 0;-webkit-text-stroke:0.6px #000;word-spacing:7px">Cut 1 (On fold)</div>
<div class="t" style="left:811px;top:1559.1px;font-size:28px;font-weight:bold;color:#000;transform:scaleX(1.0);transform-origin:0 0;-webkit-text-stroke:0.6px #000;">08-04-2025</div>
<svg class="a" style="left:0;top:0" width="2880" height="1800" viewBox="0 0 2880 1800">
<defs><pattern id="dots" x="0" y="0" width="4" height="4" patternUnits="userSpaceOnUse"><circle cx="2.5" cy="1.5" r="0.62" fill="#000"/></pattern>
<clipPath id="cv"><rect x="327.5" y="323.5" width="1926" height="1404"/></clipPath></defs>
<g clip-path="url(#cv)">
<path d="M782.5 1745 L782.5 415 L783.15 414.96 L783.81 414.92 L784.46 414.87 L785.12 414.83 L785.77 414.79 L786.43 414.74 L787.08 414.70 L787.74 414.65 L788.39 414.61 L789.04 414.56 L789.70 414.51 L790.35 414.47 L791.01 414.42 L791.66 414.37 L792.31 414.32 L792.97 414.27 L793.62 414.22 L794.27 414.17 L794.93 414.11 L795.58 414.06 L796.23 414.01 L796.88 413.96 L797.54 413.90 L798.19 413.85 L798.84 413.79 L799.49 413.73 L800.15 413.68 L800.80 413.62 L801.45 413.56 L802.10 413.51 L802.76 413.45 L803.41 413.39 L804.06 413.33 L804.71 413.27 L805.36 413.21 L806.02 413.15 L806.67 413.08 L807.32 413.02 L807.97 412.96 L808.62 412.89 L809.27 412.83 L809.92 412.77 L810.57 412.70 L811.23 412.63 L811.88 412.57 L812.53 412.50 L813.18 412.43 L813.83 412.37 L814.48 412.30 L815.13 412.23 L815.78 412.16 L816.43 412.09 L817.08 412.02 L817.73 411.95 L818.38 411.88 L819.03 411.80 L819.68 411.73 L820.33 411.66 L820.98 411.58 L821.63 411.51 L822.28 411.44 L822.93 411.36 L823.58 411.28 L824.23 411.21 L824.88 411.13 L825.53 411.05 L826.17 410.98 L826.82 410.90 L827.47 410.82 L828.12 410.74 L828.77 410.66 L829.42 410.58 L830.07 410.50 L830.72 410.42 L831.36 410.34 L832.01 410.26 L832.66 410.17 L833.31 410.09 L833.96 410.01 L834.61 409.92 L835.25 409.84 L835.90 409.75 L836.55 409.67 L837.20 409.58 L837.85 409.50 L838.49 409.41 L839.14 409.32 L839.79 409.23 L840.44 409.15 L841.08 409.06 L841.73 408.97 L842.38 408.88 L843.03 408.79 L843.67 408.70 L844.32 408.61 L844.97 408.51 L845.61 408.42 L846.26 408.33 L846.91 408.24 L847.55 408.14 L848.20 408.05 L848.85 407.96 L849.49 407.86 L850.14 407.77 L850.79 407.67 L851.43 407.58 L852.08 407.48 L852.73 407.38 L853.37 407.29 L854.02 407.19 L854.66 407.09 L855.31 406.99 L855.96 406.89 L856.60 406.79 L857.25 406.69 L857.89 406.59 L858.54 406.49 L859.19 406.39 L859.83 406.29 L860.48 406.19 L861.12 406.09 L861.77 405.98 L862.41 405.88 L863.06 405.78 L863.70 405.67 L864.35 405.57 L864.99 405.47 L865.64 405.36 L866.28 405.26 L866.93 405.15 L867.57 405.04 L868.22 404.94 L868.86 404.83 L869.51 404.72 L870.15 404.61 L870.80 404.51 L871.44 404.40 L872.09 404.29 L872.73 404.18 L873.37 404.07 L874.02 403.96 L874.66 403.85 L875.31 403.74 L875.95 403.63 L876.60 403.52 L877.24 403.40 L877.88 403.29 L878.53 403.18 L879.17 403.07 L879.82 402.95 L880.46 402.84 L881.10 402.73 L881.75 402.61 L882.39 402.50 L883.03 402.38 L883.68 402.27 L884.32 402.15 L884.96 402.03 L885.61 401.92 L886.25 401.80 L886.89 401.68 L887.54 401.57 L888.18 401.45 L888.82 401.33 L889.47 401.21 L890.11 401.09 L890.75 400.97 L891.40 400.85 L892.04 400.73 L892.68 400.61 L893.33 400.49 L893.97 400.37 L894.61 400.25 L895.25 400.13 L895.90 400.01 L896.54 399.88 L897.18 399.76 L897.82 399.64 L898.47 399.52 L899.11 399.39 L899.75 399.27 L900.39 399.14 L901.04 399.02 L901.68 398.89 L902.32 398.77 L902.96 398.64 L903.61 398.52 L904.25 398.39 L904.89 398.27 L905.53 398.14 L906.17 398.01 L906.82 397.89 L907.46 397.76 L908.10 397.63 L908.74 397.50 L909.38 397.37 L910.03 397.25 L910.67 397.12 L911.31 396.99 L911.95 396.86 L912.59 396.73 L913.23 396.60 L913.88 396.47 L914.52 396.34 L915.16 396.21 L915.80 396.08 L916.44 395.94 L917.08 395.81 L917.72 395.68 L918.37 395.55 L919.01 395.42 L919.65 395.28 L920.29 395.15 L920.93 395.02 L921.57 394.88 L922.21 394.75 L922.85 394.62 L923.50 394.48 L924.14 394.35 L924.78 394.21 L925.42 394.08 L926.06 393.94 L926.70 393.81 L927.34 393.67 L927.98 393.54 L928.62 393.40 L929.26 393.26 L929.90 393.13 L930.55 392.99 L931.19 392.85 L931.83 392.72 L932.47 392.58 L933.11 392.44 L933.75 392.30 L934.39 392.16 L935.03 392.02 L935.67 391.89 L936.31 391.75 L936.95 391.61 L937.59 391.47 L938.23 391.33 L938.87 391.19 L939.51 391.05 L940.15 390.91 L940.80 390.77 L941.44 390.63 L942.08 390.49 L942.72 390.35 L943.36 390.21 L944.00 390.06 L944.64 389.92 L945.28 389.78 L945.92 389.64 L946.56 389.50 L947.20 389.35 L947.84 389.21 L948.48 389.07 L949.12 388.93 L949.76 388.78 L950.40 388.64 L951.04 388.50 L951.68 388.35 L952.32 388.21 L952.96 388.06 L953.60 387.92 L954.24 387.77 L954.88 387.63 L955.52 387.49 L956.16 387.34 L956.80 387.20 L957.44 387.05 L958.08 386.90 L958.72 386.76 L959.36 386.61 L960.00 386.47 L960.64 386.32 L961.28 386.17 L961.92 386.02 L962.56 385.88 L963.20 385.73 L963.84 385.58 L964.47 385.43 L965.11 385.28 L965.75 385.13 L966.39 384.98 L967.03 384.83 L967.67 384.68 L968.30 384.52 L968.94 384.37 L969.58 384.22 L970.22 384.06 L970.86 383.91 L971.49 383.75 L972.13 383.60 L972.77 383.44 L973.40 383.29 L974.04 383.13 L974.67 382.97 L975.31 382.81 L975.95 382.65 L976.58 382.49 L977.22 382.33 L977.85 382.16 L978.48 382.00 L979.12 381.84 L979.75 381.67 L980.39 381.51 L981.02 381.34 L981.65 381.17 L982.28 381.00 L982.92 380.83 L983.55 380.66 L984.18 380.49 L984.81 380.32 L985.44 380.15 L986.07 379.97 L986.70 379.80 L987.33 379.62 L987.96 379.44 L988.59 379.26 L989.22 379.08 L989.84 378.90 L990.47 378.72 L991.10 378.54 L991.72 378.35 L992.35 378.17 L992.97 377.98 L993.60 377.79 L994.22 377.60 L994.85 377.41 L995.47 377.22 L996.10 377.02 L996.72 376.83 L997.34 376.63 L997.96 376.43 L998.58 376.24 L999.20 376.03 L999.82 375.83 L1000.44 375.63 L1001.06 375.42 L1001.68 375.22 L1002.30 375.01 L1002.91 374.80 L1003.53 374.59 L1004.15 374.38 L1004.76 374.16 L1005.38 373.95 L1005.99 373.73 L1006.60 373.51 L1007.22 373.29 L1007.83 373.07 L1008.44 372.85 L1009.05 372.62 L1009.66 372.39 L1010.27 372.16 L1010.88 371.93 L1011.49 371.70 L1012.09 371.47 L1012.70 371.23 L1013.31 370.99 L1013.91 370.75 L1014.52 370.51 L1015.12 370.27 L1015.72 370.02 L1016.33 369.77 L1016.93 369.53 L1017.53 369.27 L1018.13 369.02 L1018.73 368.77 L1019.32 368.51 L1019.92 368.25 L1020.52 367.99 L1021.12 367.73 L1021.71 367.46 L1022.30 367.19 L1022.90 366.92 L1023.49 366.65 L1024.08 366.38 L1024.67 366.10 L1025.26 365.82 L1025.85 365.54 L1026.44 365.26 L1027.03 364.98 L1027.61 364.69 L1028.20 364.40 L1028.79 364.11 L1029.37 363.81 L1029.95 363.52 L1030.53 363.22 L1031.11 362.92 L1031.69 362.61 L1032.27 362.31 L1032.85 362.00 L1033.43 361.69 L1034.01 361.38 L1034.58 361.06 L1035.15 360.74 L1035.73 360.42 L1036.30 360.10 L1047 351.2 L1604.9 450 L1605.9 482 L1598 515.8 L1590 560 L1589.66 561.53 L1589.32 563.05 L1588.99 564.58 L1588.65 566.10 L1588.32 567.63 L1587.99 569.16 L1587.66 570.69 L1587.34 572.22 L1587.01 573.74 L1586.69 575.27 L1586.37 576.80 L1586.05 578.33 L1585.73 579.86 L1585.41 581.39 L1585.10 582.92 L1584.78 584.45 L1584.47 585.98 L1584.16 587.51 L1583.86 589.05 L1583.55 590.58 L1583.25 592.11 L1582.94 593.64 L1582.64 595.17 L1582.34 596.71 L1582.05 598.24 L1581.75 599.78 L1581.46 601.31 L1581.16 602.84 L1580.87 604.38 L1580.59 605.91 L1580.30 607.45 L1580.01 608.98 L1579.73 610.52 L1579.45 612.06 L1579.17 613.59 L1578.89 615.13 L1578.61 616.67 L1578.34 618.20 L1578.06 619.74 L1577.79 621.28 L1577.52 622.82 L1577.25 624.36 L1576.99 625.89 L1576.72 627.43 L1576.46 628.97 L1576.19 630.51 L1575.93 632.05 L1575.68 633.59 L1575.42 635.13 L1575.16 636.67 L1574.91 638.21 L1574.66 639.75 L1574.41 641.30 L1574.16 642.84 L1573.91 644.38 L1573.67 645.92 L1573.42 647.46 L1573.18 649.01 L1572.94 650.55 L1572.70 652.09 L1572.46 653.64 L1572.23 655.18 L1571.99 656.72 L1571.76 658.27 L1571.53 659.81 L1571.30 661.36 L1571.07 662.90 L1570.85 664.45 L1570.62 665.99 L1570.40 667.54 L1570.18 669.09 L1569.96 670.63 L1569.74 672.18 L1569.52 673.72 L1569.31 675.27 L1569.10 676.82 L1568.88 678.37 L1568.67 679.91 L1568.46 681.46 L1568.26 683.01 L1568.05 684.56 L1567.85 686.11 L1567.65 687.65 L1567.44 689.20 L1567.25 690.75 L1567.05 692.30 L1566.85 693.85 L1566.66 695.40 L1566.46 696.95 L1566.27 698.50 L1566.08 700.05 L1565.89 701.60 L1565.71 703.15 L1565.52 704.71 L1565.34 706.26 L1565.15 707.81 L1564.97 709.36 L1564.79 710.91 L1564.61 712.46 L1564.44 714.02 L1564.26 715.57 L1564.09 717.12 L1563.92 718.67 L1563.75 720.23 L1563.58 721.78 L1563.41 723.33 L1563.24 724.89 L1563.08 726.44 L1562.92 727.99 L1562.76 729.55 L1562.60 731.10 L1562.44 732.66 L1562.28 734.21 L1562.12 735.77 L1561.97 737.32 L1561.82 738.88 L1561.67 740.43 L1561.52 741.99 L1561.37 743.54 L1561.22 745.10 L1561.07 746.66 L1560.93 748.21 L1560.79 749.77 L1560.65 751.33 L1560.51 752.88 L1560.37 754.44 L1560.23 756.00 L1560.10 757.55 L1559.96 759.11 L1559.83 760.67 L1559.70 762.23 L1559.58 763.78 L1559.45 765.34 L1559.33 766.90 L1559.21 768.46 L1559.09 770.02 L1558.97 771.58 L1558.86 773.13 L1558.74 774.69 L1558.64 776.25 L1558.53 777.81 L1558.43 779.37 L1558.32 780.93 L1558.23 782.49 L1558.13 784.05 L1558.04 785.61 L1557.95 787.17 L1557.87 788.72 L1557.79 790.28 L1557.71 791.84 L1557.63 793.40 L1557.56 794.96 L1557.49 796.52 L1557.43 798.08 L1557.37 799.64 L1557.31 801.20 L1557.26 802.76 L1557.21 804.32 L1557.17 805.88 L1557.13 807.44 L1557.09 809.00 L1557.06 810.56 L1557.04 812.12 L1557.01 813.69 L1557.00 815.25 L1556.98 816.81 L1556.98 818.37 L1556.97 819.93 L1556.97 821.49 L1556.98 823.05 L1556.99 824.61 L1557.01 826.17 L1557.03 827.73 L1557.06 829.29 L1557.09 830.85 L1557.13 832.41 L1557.18 833.97 L1557.23 835.53 L1557.28 837.09 L1557.34 838.65 L1557.41 840.21 L1557.48 841.77 L1557.56 843.33 L1557.65 844.89 L1557.74 846.45 L1557.84 848.01 L1557.94 849.57 L1558.05 851.13 L1558.17 852.69 L1558.29 854.25 L1558.41 855.81 L1558.54 857.37 L1558.67 858.93 L1558.80 860.49 L1558.94 862.05 L1559.08 863.61 L1559.22 865.16 L1559.37 866.72 L1559.51 868.28 L1559.65 869.84 L1559.80 871.40 L1559.94 872.96 L1560.09 874.51 L1560.23 876.07 L1560.37 877.63 L1560.51 879.19 L1560.65 880.74 L1560.78 882.30 L1560.91 883.86 L1561.04 885.42 L1561.17 886.97 L1561.30 888.53 L1561.42 890.08 L1561.55 891.64 L1561.68 893.20 L1561.80 894.75 L1561.93 896.31 L1562.06 897.86 L1562.19 899.42 L1562.32 900.97 L1562.45 902.52 L1562.58 904.08 L1562.72 905.63 L1562.86 907.19 L1563.00 908.74 L1563.14 910.29 L1563.29 911.85 L1563.45 913.40 L1563.60 914.95 L1563.76 916.50 L1563.93 918.06 L1564.10 919.61 L1564.27 921.16 L1564.45 922.71 L1564.63 924.26 L1564.81 925.81 L1565.00 927.36 L1565.19 928.91 L1565.39 930.46 L1565.59 932.01 L1565.79 933.56 L1566.00 935.10 L1566.21 936.65 L1566.43 938.20 L1566.64 939.75 L1566.87 941.29 L1567.09 942.84 L1567.32 944.39 L1567.56 945.93 L1567.80 947.47 L1568.04 949.02 L1568.28 950.56 L1568.53 952.11 L1568.78 953.65 L1569.04 955.19 L1569.30 956.73 L1569.56 958.27 L1569.83 959.81 L1570.10 961.35 L1570.38 962.89 L1570.66 964.43 L1570.94 965.97 L1571.22 967.51 L1571.51 969.05 L1571.80 970.58 L1572.10 972.12 L1572.40 973.65 L1572.70 975.19 L1573.01 976.72 L1573.32 978.25 L1573.63 979.79 L1573.95 981.32 L1574.27 982.85 L1574.60 984.38 L1574.92 985.91 L1575.26 987.44 L1575.59 988.97 L1575.93 990.49 L1576.27 992.02 L1576.61 993.54 L1576.96 995.07 L1577.31 996.59 L1577.67 998.12 L1578.03 999.64 L1578.39 1001.16 L1578.76 1002.68 L1579.12 1004.20 L1579.50 1005.72 L1579.87 1007.24 L1580.25 1008.76 L1580.63 1010.27 L1581.02 1011.79 L1581.41 1013.30 L1581.80 1014.81 L1582.20 1016.33 L1582.60 1017.84 L1583.00 1019.35 L1583.41 1020.85 L1583.82 1022.36 L1584.24 1023.86 L1584.67 1025.37 L1585.10 1026.87 L1585.53 1028.37 L1585.97 1029.87 L1586.41 1031.36 L1586.86 1032.86 L1587.31 1034.35 L1587.77 1035.84 L1588.24 1037.33 L1588.71 1038.81 L1589.19 1040.30 L1589.67 1041.78 L1590.16 1043.26 L1590.66 1044.74 L1591.16 1046.21 L1591.67 1047.68 L1592.19 1049.15 L1592.71 1050.62 L1593.24 1052.08 L1593.78 1053.54 L1594.32 1055.00 L1594.88 1056.45 L1595.44 1057.90 L1596.00 1059.35 L1596.58 1060.80 L1597.16 1062.24 L1597.75 1063.68 L1598.35 1065.12 L1598.96 1066.55 L1599.58 1067.98 L1600.20 1069.40 L1600.84 1070.83 L1601.48 1072.24 L1602.13 1073.66 L1602.79 1075.07 L1603.46 1076.48 L1604.14 1077.88 L1604.83 1079.28 L1605.53 1080.67 L1606.23 1082.07 L1606.95 1083.45 L1607.68 1084.84 L1608.42 1086.21 L1609.16 1087.59 L1609.92 1088.96 L1610.69 1090.32 L1611.46 1091.68 L1612.24 1093.04 L1613.04 1094.39 L1613.84 1095.74 L1614.65 1097.08 L1615.47 1098.42 L1616.30 1099.75 L1617.13 1101.08 L1617.98 1102.40 L1618.83 1103.72 L1619.69 1105.03 L1620.56 1106.34 L1621.44 1107.64 L1622.32 1108.94 L1623.21 1110.23 L1624.11 1111.52 L1625.02 1112.80 L1625.93 1114.08 L1626.86 1115.35 L1627.79 1116.61 L1628.72 1117.87 L1629.66 1119.13 L1630.61 1120.37 L1631.57 1121.62 L1632.53 1122.85 L1633.50 1124.08 L1634.48 1125.31 L1635.46 1126.53 L1636.45 1127.74 L1637.44 1128.95 L1638.44 1130.15 L1639.45 1131.34 L1640.46 1132.53 L1641.47 1133.71 L1642.50 1134.88 L1643.52 1136.05 L1644.56 1137.21 L1645.60 1138.37 L1646.65 1139.51 L1647.71 1140.64 L1648.78 1141.76 L1649.87 1142.86 L1650.97 1143.94 L1652.09 1145.01 L1653.23 1146.06 L1654.39 1147.08 L1655.57 1148.08 L1656.77 1149.06 L1658.00 1150.00 L1659.26 1150.93 L1660.54 1151.82 L1661.85 1152.67 L1663.20 1153.50 L1706.5 1153.5 L1706.5 1745 L1675.5 1745 L1675.5 1184.4 L1673.46 1184.52 L1671.44 1184.55 L1669.46 1184.51 L1667.50 1184.38 L1665.57 1184.19 L1663.66 1183.91 L1661.78 1183.57 L1659.93 1183.16 L1658.11 1182.68 L1656.31 1182.13 L1654.53 1181.53 L1652.78 1180.86 L1651.06 1180.14 L1649.36 1179.36 L1647.68 1178.53 L1646.03 1177.64 L1644.40 1176.71 L1642.79 1175.73 L1641.21 1174.71 L1639.64 1173.65 L1638.11 1172.54 L1636.59 1171.40 L1635.09 1170.22 L1633.61 1169.01 L1632.16 1167.77 L1630.72 1166.50 L1629.31 1165.21 L1627.91 1163.89 L1626.54 1162.54 L1625.18 1161.18 L1623.84 1159.79 L1622.52 1158.38 L1621.22 1156.95 L1619.93 1155.51 L1618.66 1154.04 L1617.40 1152.56 L1616.17 1151.06 L1614.94 1149.55 L1613.73 1148.02 L1612.53 1146.48 L1611.35 1144.93 L1610.18 1143.37 L1609.03 1141.79 L1607.88 1140.21 L1606.75 1138.62 L1605.62 1137.02 L1604.51 1135.41 L1603.41 1133.80 L1602.32 1132.18 L1601.24 1130.56 L1600.16 1128.94 L1599.10 1127.31 L1598.04 1125.68 L1597.00 1124.05 L1595.96 1122.42 L1594.93 1120.78 L1593.91 1119.14 L1592.89 1117.49 L1591.89 1115.84 L1590.89 1114.19 L1589.91 1112.53 L1588.93 1110.87 L1587.96 1109.21 L1587.00 1107.54 L1586.05 1105.86 L1585.11 1104.19 L1584.17 1102.51 L1583.25 1100.82 L1582.33 1099.13 L1581.43 1097.44 L1580.53 1095.74 L1579.64 1094.04 L1578.77 1092.33 L1577.90 1090.62 L1577.04 1088.91 L1576.19 1087.19 L1575.35 1085.47 L1574.52 1083.74 L1573.69 1082.01 L1572.88 1080.28 L1572.08 1078.54 L1571.29 1076.80 L1570.50 1075.05 L1569.73 1073.30 L1568.97 1071.54 L1568.21 1069.79 L1567.47 1068.02 L1566.73 1066.25 L1566.01 1064.48 L1565.30 1062.71 L1564.59 1060.93 L1563.90 1059.14 L1563.21 1057.35 L1562.54 1055.56 L1561.88 1053.76 L1561.22 1051.96 L1560.58 1050.16 L1559.95 1048.35 L1559.32 1046.53 L1558.71 1044.72 L1558.11 1042.89 L1557.52 1041.07 L1556.94 1039.24 L1556.37 1037.40 L1555.81 1035.56 L1555.26 1033.72 L1554.72 1031.87 L1554.19 1030.02 L1553.67 1028.17 L1553.15 1026.31 L1552.65 1024.45 L1552.15 1022.59 L1551.66 1020.72 L1551.18 1018.86 L1550.71 1016.98 L1550.24 1015.11 L1549.79 1013.23 L1549.33 1011.36 L1548.89 1009.47 L1548.45 1007.59 L1548.02 1005.71 L1547.59 1003.82 L1547.17 1001.93 L1546.75 1000.04 L1546.34 998.15 L1545.93 996.26 L1545.53 994.37 L1545.13 992.48 L1544.74 990.58 L1544.34 988.69 L1543.96 986.79 L1543.57 984.90 L1543.19 983.00 L1542.81 981.10 L1542.43 979.21 L1542.06 977.31 L1541.68 975.42 L1541.31 973.52 L1540.94 971.63 L1540.57 969.73 L1540.21 967.84 L1539.84 965.95 L1539.48 964.05 L1539.12 962.16 L1538.77 960.27 L1538.42 958.37 L1538.07 956.48 L1537.72 954.59 L1537.38 952.69 L1537.05 950.80 L1536.71 948.90 L1536.39 947.01 L1536.07 945.11 L1535.75 943.21 L1535.44 941.32 L1535.13 939.42 L1534.83 937.52 L1534.53 935.62 L1534.24 933.72 L1533.96 931.82 L1533.68 929.91 L1533.40 928.01 L1533.14 926.11 L1532.87 924.20 L1532.61 922.30 L1532.36 920.39 L1532.11 918.48 L1531.87 916.58 L1531.63 914.67 L1531.40 912.76 L1531.17 910.85 L1530.95 908.94 L1530.73 907.03 L1530.52 905.12 L1530.31 903.21 L1530.11 901.30 L1529.92 899.38 L1529.72 897.47 L1529.54 895.56 L1529.36 893.64 L1529.18 891.73 L1529.01 889.81 L1528.84 887.90 L1528.68 885.98 L1528.52 884.06 L1528.37 882.15 L1528.22 880.23 L1528.08 878.31 L1527.94 876.39 L1527.81 874.47 L1527.68 872.55 L1527.56 870.63 L1527.44 868.71 L1527.33 866.79 L1527.22 864.87 L1527.12 862.95 L1527.02 861.03 L1526.93 859.11 L1526.84 857.19 L1526.75 855.26 L1526.67 853.34 L1526.60 851.42 L1526.53 849.50 L1526.46 847.57 L1526.40 845.65 L1526.35 843.73 L1526.29 841.80 L1526.25 839.88 L1526.21 837.95 L1526.17 836.03 L1526.13 834.10 L1526.10 832.18 L1526.08 830.25 L1526.06 828.33 L1526.04 826.40 L1526.03 824.48 L1526.03 822.55 L1526.03 820.63 L1526.03 818.70 L1526.03 816.78 L1526.05 814.85 L1526.06 812.92 L1526.08 811.00 L1526.11 809.07 L1526.13 807.15 L1526.17 805.22 L1526.20 803.30 L1526.25 801.37 L1526.29 799.44 L1526.34 797.52 L1526.40 795.59 L1526.45 793.67 L1526.52 791.74 L1526.58 789.82 L1526.66 787.89 L1526.73 785.97 L1526.81 784.04 L1526.89 782.12 L1526.98 780.19 L1527.07 778.27 L1527.17 776.34 L1527.27 774.42 L1527.37 772.49 L1527.48 770.57 L1527.59 768.65 L1527.71 766.72 L1527.83 764.80 L1527.95 762.88 L1528.08 760.96 L1528.22 759.03 L1528.35 757.11 L1528.49 755.19 L1528.64 753.27 L1528.78 751.35 L1528.93 749.43 L1529.09 747.51 L1529.25 745.59 L1529.41 743.67 L1529.58 741.75 L1529.75 739.83 L1529.93 737.91 L1530.10 735.99 L1530.29 734.08 L1530.47 732.16 L1530.66 730.24 L1530.85 728.33 L1531.05 726.41 L1531.25 724.50 L1531.46 722.58 L1531.66 720.67 L1531.88 718.76 L1532.09 716.84 L1532.31 714.93 L1532.53 713.02 L1532.76 711.11 L1532.99 709.20 L1533.22 707.29 L1533.46 705.38 L1533.70 703.47 L1533.94 701.56 L1534.18 699.65 L1534.43 697.74 L1534.69 695.83 L1534.94 693.93 L1535.20 692.02 L1535.46 690.11 L1535.73 688.21 L1535.99 686.30 L1536.26 684.40 L1536.54 682.49 L1536.81 680.59 L1537.09 678.68 L1537.37 676.78 L1537.66 674.88 L1537.94 672.98 L1538.23 671.07 L1538.52 669.17 L1538.82 667.27 L1539.12 665.37 L1539.41 663.47 L1539.72 661.57 L1540.02 659.67 L1540.33 657.77 L1540.64 655.87 L1540.95 653.97 L1541.26 652.07 L1541.58 650.17 L1541.89 648.28 L1542.21 646.38 L1542.53 644.48 L1542.86 642.58 L1543.18 640.69 L1543.51 638.79 L1543.84 636.89 L1544.17 635.00 L1544.50 633.10 L1544.84 631.21 L1545.17 629.31 L1545.51 627.42 L1545.85 625.52 L1546.19 623.63 L1546.53 621.73 L1546.88 619.84 L1547.22 617.95 L1547.57 616.05 L1547.92 614.16 L1548.27 612.27 L1548.62 610.37 L1548.97 608.48 L1549.32 606.59 L1549.68 604.70 L1550.03 602.80 L1550.39 600.91 L1550.75 599.02 L1551.11 597.13 L1551.47 595.24 L1551.83 593.34 L1552.19 591.45 L1552.55 589.56 L1552.91 587.67 L1553.28 585.78 L1553.64 583.89 L1554.01 582.00 L1554.37 580.11 L1554.74 578.22 L1555.10 576.33 L1555.47 574.44 L1555.84 572.55 L1556.21 570.66 L1556.58 568.77 L1556.94 566.88 L1557.31 564.99 L1557.68 563.10 L1558.05 561.21 L1558.42 559.32 L1558.79 557.43 L1559.16 555.54 L1559.53 553.65 L1559.90 551.76 L1560.27 549.87 L1560.64 547.98 L1561.01 546.09 L1561.38 544.20 L1561.75 542.31 L1562.12 540.42 L1562.48 538.53 L1562.85 536.64 L1563.22 534.75 L1563.59 532.86 L1563.95 530.97 L1564.32 529.08 L1564.69 527.19 L1565.05 525.29 L1565.42 523.40 L1565.78 521.51 L1566.14 519.62 L1566.51 517.73 L1566.87 515.84 L1567.23 513.95 L1567.59 512.06 L1567.95 510.17 L1568.30 508.28 L1568.66 506.39 L1569.02 504.49 L1569.37 502.60 L1569.73 500.71 L1570.08 498.82 L1570.43 496.93 L1570.78 495.03 L1571.13 493.14 L1571.47 491.25 L1571.82 489.36 L1572.17 487.46 L1572.51 485.57 L1572.85 483.68 L1573.19 481.78 L1573.53 479.89 L1573.86 477.99 L1574.20 476.10 L1054.9 384.3 L1054.29 384.65 L1053.68 384.99 L1053.06 385.33 L1052.44 385.67 L1051.83 386.01 L1051.21 386.34 L1050.59 386.66 L1049.96 386.99 L1049.34 387.31 L1048.72 387.63 L1048.09 387.95 L1047.46 388.26 L1046.83 388.57 L1046.20 388.87 L1045.57 389.18 L1044.94 389.48 L1044.30 389.78 L1043.67 390.07 L1043.03 390.37 L1042.39 390.66 L1041.75 390.94 L1041.11 391.23 L1040.47 391.51 L1039.83 391.79 L1039.19 392.07 L1038.54 392.34 L1037.90 392.62 L1037.25 392.89 L1036.60 393.16 L1035.95 393.42 L1035.30 393.69 L1034.65 393.95 L1034.00 394.21 L1033.35 394.46 L1032.70 394.72 L1032.04 394.97 L1031.39 395.23 L1030.73 395.47 L1030.08 395.72 L1029.42 395.97 L1028.76 396.21 L1028.10 396.46 L1027.44 396.70 L1026.78 396.94 L1026.12 397.17 L1025.46 397.41 L1024.80 397.64 L1024.13 397.88 L1023.47 398.11 L1022.81 398.34 L1022.14 398.57 L1021.48 398.80 L1020.81 399.02 L1020.15 399.25 L1019.48 399.47 L1018.81 399.69 L1018.15 399.92 L1017.48 400.14 L1016.81 400.36 L1016.14 400.58 L1015.47 400.79 L1014.80 401.01 L1014.14 401.23 L1013.47 401.44 L1012.80 401.66 L1012.13 401.87 L1011.46 402.08 L1010.79 402.30 L1010.11 402.51 L1009.44 402.72 L1008.77 402.93 L1008.10 403.14 L1007.43 403.35 L1006.76 403.55 L1006.09 403.76 L1005.41 403.97 L1004.74 404.17 L1004.07 404.38 L1003.39 404.58 L1002.72 404.78 L1002.05 404.99 L1001.37 405.19 L1000.70 405.39 L1000.02 405.59 L999.35 405.79 L998.68 405.99 L998.00 406.19 L997.33 406.39 L996.65 406.58 L995.97 406.78 L995.30 406.98 L994.62 407.17 L993.95 407.37 L993.27 407.56 L992.59 407.75 L991.92 407.95 L991.24 408.14 L990.56 408.33 L989.89 408.52 L989.21 408.71 L988.53 408.90 L987.85 409.09 L987.17 409.28 L986.50 409.46 L985.82 409.65 L985.14 409.84 L984.46 410.02 L983.78 410.21 L983.10 410.40 L982.42 410.58 L981.74 410.76 L981.06 410.95 L980.38 411.13 L979.70 411.31 L979.02 411.49 L978.34 411.67 L977.66 411.85 L976.98 412.03 L976.30 412.21 L975.62 412.39 L974.94 412.57 L974.26 412.75 L973.57 412.93 L972.89 413.10 L972.21 413.28 L971.53 413.46 L970.85 413.63 L970.16 413.81 L969.48 413.98 L968.80 414.15 L968.12 414.33 L967.43 414.50 L966.75 414.67 L966.07 414.85 L965.38 415.02 L964.70 415.19 L964.02 415.36 L963.33 415.53 L962.65 415.70 L961.97 415.87 L961.28 416.04 L960.60 416.21 L959.91 416.38 L959.23 416.54 L958.54 416.71 L957.86 416.88 L957.18 417.05 L956.49 417.21 L955.81 417.38 L955.12 417.54 L954.44 417.71 L953.75 417.87 L953.06 418.04 L952.38 418.20 L951.69 418.37 L951.01 418.53 L950.32 418.69 L949.64 418.86 L948.95 419.02 L948.26 419.18 L947.58 419.34 L946.89 419.51 L946.21 419.67 L945.52 419.83 L944.83 419.99 L944.15 420.15 L943.46 420.31 L942.77 420.47 L942.09 420.63 L941.40 420.79 L940.71 420.95 L940.03 421.10 L939.34 421.26 L938.65 421.42 L937.97 421.58 L937.28 421.74 L936.59 421.89 L935.90 422.05 L935.22 422.21 L934.53 422.37 L933.84 422.52 L933.16 422.68 L932.47 422.83 L931.78 422.99 L931.09 423.15 L930.41 423.30 L929.72 423.46 L929.03 423.61 L928.34 423.77 L927.65 423.92 L926.97 424.08 L926.28 424.23 L925.59 424.38 L924.90 424.54 L924.22 424.69 L923.53 424.85 L922.84 425.00 L922.15 425.15 L921.46 425.31 L920.78 425.46 L920.09 425.61 L919.40 425.77 L918.71 425.92 L918.02 426.07 L917.34 426.22 L916.65 426.38 L915.96 426.53 L915.27 426.68 L914.58 426.83 L913.90 426.99 L913.21 427.14 L912.52 427.29 L911.83 427.44 L911.14 427.59 L910.46 427.74 L909.77 427.89 L909.08 428.04 L908.39 428.20 L907.70 428.35 L907.01 428.50 L906.33 428.65 L905.64 428.80 L904.95 428.95 L904.26 429.10 L903.57 429.24 L902.88 429.39 L902.20 429.54 L901.51 429.69 L900.82 429.84 L900.13 429.99 L899.44 430.13 L898.75 430.28 L898.06 430.43 L897.38 430.58 L896.69 430.72 L896.00 430.87 L895.31 431.01 L894.62 431.16 L893.93 431.31 L893.24 431.45 L892.55 431.60 L891.87 431.74 L891.18 431.88 L890.49 432.03 L889.80 432.17 L889.11 432.31 L888.42 432.46 L887.73 432.60 L887.04 432.74 L886.35 432.88 L885.66 433.02 L884.97 433.16 L884.28 433.30 L883.59 433.44 L882.91 433.58 L882.22 433.72 L881.53 433.86 L880.84 434.00 L880.15 434.14 L879.46 434.27 L878.77 434.41 L878.08 434.55 L877.39 434.68 L876.70 434.82 L876.01 434.95 L875.32 435.09 L874.63 435.22 L873.93 435.36 L873.24 435.49 L872.55 435.62 L871.86 435.75 L871.17 435.88 L870.48 436.02 L869.79 436.15 L869.10 436.28 L868.41 436.41 L867.72 436.53 L867.03 436.66 L866.34 436.79 L865.64 436.92 L864.95 437.04 L864.26 437.17 L863.57 437.29 L862.88 437.42 L862.19 437.54 L861.49 437.67 L860.80 437.79 L860.11 437.91 L859.42 438.03 L858.73 438.16 L858.03 438.28 L857.34 438.40 L856.65 438.51 L855.96 438.63 L855.26 438.75 L854.57 438.87 L853.88 438.98 L853.18 439.10 L852.49 439.22 L851.80 439.33 L851.10 439.44 L850.41 439.56 L849.72 439.67 L849.02 439.78 L848.33 439.89 L847.64 440.00 L846.94 440.11 L846.25 440.22 L845.55 440.33 L844.86 440.43 L844.17 440.54 L843.47 440.65 L842.78 440.75 L842.08 440.86 L841.39 440.96 L840.69 441.06 L840.00 441.16 L839.30 441.26 L838.61 441.36 L837.91 441.46 L837.22 441.56 L836.52 441.66 L835.82 441.76 L835.13 441.85 L834.43 441.95 L833.74 442.04 L833.04 442.13 L832.34 442.23 L831.65 442.32 L830.95 442.41 L830.25 442.50 L829.56 442.59 L828.86 442.68 L828.16 442.76 L827.46 442.85 L826.77 442.94 L826.07 443.02 L825.37 443.10 L824.67 443.19 L823.98 443.27 L823.28 443.35 L822.58 443.43 L821.88 443.51 L821.18 443.58 L820.48 443.66 L819.78 443.74 L819.08 443.81 L818.39 443.89 L817.69 443.96 L816.99 444.03 L816.29 444.10 L815.59 444.17 L814.89 444.24 L814.19 444.31 L813.49 444.38 L812.79 444.44 L812.09 444.51 L811.38 444.57 L810.68 444.63 L809.98 444.69 L809.28 444.75 L808.58 444.81 L807.88 444.87 L807.18 444.93 L806.47 444.99 L805.77 445.04 L805.07 445.09 L804.37 445.15 L803.66 445.20 L802.96 445.25 L802.26 445.30 L801.56 445.35 L800.85 445.39 L800.15 445.44 L799.44 445.49 L798.74 445.53 L798.04 445.57 L797.33 445.61 L796.63 445.65 L795.92 445.69 L795.22 445.73 L794.51 445.77 L793.81 445.80 L793.10 445.84 L792.40 445.87 L791.69 445.90 L790.99 445.93 L790.28 445.96 L789.57 445.99 L788.87 446.02 L788.16 446.04 L787.45 446.07 L786.75 446.09 L786.04 446.11 L785.33 446.13 L784.62 446.15 L783.92 446.17 L783.21 446.18 L782.50 446.20 Z" fill="url(#dots)"/>
<path d="M2320 397.6 L2145.1 427.4 L2144.45 460.77 L2144.52 462.54 L2144.61 464.31 L2144.73 466.07 L2144.87 467.82 L2145.03 469.58 L2145.21 471.33 L2145.41 473.08 L2145.62 474.82 L2145.86 476.56 L2146.11 478.30 L2146.38 480.04 L2146.67 481.78 L2146.97 483.51 L2147.28 485.24 L2147.60 486.97 L2147.94 488.70 L2148.28 490.42 L2148.64 492.14 L2149.00 493.87 L2149.37 495.59 L2149.75 497.31 L2150.14 499.03 L2150.53 500.75 L2150.92 502.46 L2151.32 504.18 L2151.72 505.90 L2152.13 507.62 L2152.53 509.33 L2152.93 511.05 L2153.33 512.77 L2153.73 514.48 L2154.13 516.20 L2154.53 517.92 L2154.92 519.64 L2155.31 521.36 L2155.70 523.08 L2156.08 524.80 L2156.47 526.52 L2156.85 528.24 L2157.23 529.96 L2157.60 531.68 L2157.98 533.40 L2158.35 535.12 L2158.72 536.84 L2159.09 538.57 L2159.45 540.29 L2159.82 542.01 L2160.18 543.74 L2160.54 545.46 L2160.90 547.19 L2161.26 548.91 L2161.61 550.64 L2161.97 552.36 L2162.32 554.09 L2162.67 555.81 L2163.02 557.54 L2163.37 559.27 L2163.72 560.99 L2164.06 562.72 L2164.41 564.45 L2164.75 566.17 L2165.10 567.90 L2165.44 569.63 L2165.78 571.36 L2166.12 573.08 L2166.46 574.81 L2166.80 576.54 L2167.13 578.27 L2167.47 580.00 L2167.80 581.73 L2168.14 583.45 L2168.47 585.18 L2168.81 586.91 L2169.14 588.64 L2169.47 590.37 L2169.80 592.10 L2170.13 593.83 L2170.46 595.56 L2170.78 597.29 L2171.11 599.02 L2171.43 600.75 L2171.75 602.49 L2172.07 604.22 L2172.39 605.95 L2172.71 607.68 L2173.03 609.41 L2173.34 611.15 L2173.66 612.88 L2173.97 614.61 L2174.28 616.35 L2174.59 618.08 L2174.90 619.81 L2175.20 621.55 L2175.50 623.28 L2175.81 625.02 L2176.11 626.75 L2176.40 628.49 L2176.70 630.22 L2176.99 631.96 L2177.28 633.70 L2177.57 635.43 L2177.86 637.17 L2178.15 638.91 L2178.43 640.65 L2178.71 642.39 L2178.99 644.12 L2179.26 645.86 L2179.54 647.60 L2179.81 649.34 L2180.07 651.08 L2180.34 652.82 L2180.60 654.57 L2180.86 656.31 L2181.12 658.05 L2181.38 659.79 L2181.63 661.54 L2181.88 663.28 L2182.12 665.02 L2182.37 666.77 L2182.61 668.51 L2182.85 670.26 L2183.08 672.01 L2183.31 673.75 L2183.54 675.50 L2183.77 677.25 L2183.99 678.99 L2184.21 680.74 L2184.43 682.49 L2184.65 684.24 L2184.86 685.99 L2185.07 687.74 L2185.27 689.49 L2185.47 691.24 L2185.67 692.99 L2185.87 694.74 L2186.06 696.49 L2186.26 698.25 L2186.44 700.00 L2186.63 701.75 L2186.81 703.50 L2186.99 705.26 L2187.16 707.01 L2187.34 708.77 L2187.51 710.52 L2187.67 712.27 L2187.83 714.03 L2187.99 715.78 L2188.15 717.54 L2188.31 719.30 L2188.46 721.05 L2188.60 722.81 L2188.75 724.56 L2188.89 726.32 L2189.03 728.08 L2189.16 729.84 L2189.29 731.59 L2189.42 733.35 L2189.55 735.11 L2189.67 736.87 L2189.79 738.63 L2189.91 740.38 L2190.02 742.14 L2190.13 743.90 L2190.23 745.66 L2190.34 747.42 L2190.44 749.18 L2190.53 750.94 L2190.63 752.70 L2190.71 754.46 L2190.80 756.22 L2190.88 757.98 L2190.96 759.74 L2191.04 761.50 L2191.11 763.26 L2191.18 765.02 L2191.25 766.78 L2191.31 768.54 L2191.37 770.30 L2191.43 772.06 L2191.48 773.82 L2191.53 775.59 L2191.58 777.35 L2191.62 779.11 L2191.66 780.87 L2191.70 782.63 L2191.73 784.39 L2191.76 786.15 L2191.78 787.91 L2191.81 789.68 L2191.82 791.44 L2191.84 793.20 L2191.85 794.96 L2191.86 796.72 L2191.86 798.48 L2191.87 800.24 L2191.86 802.00 L2191.86 803.77 L2191.85 805.53 L2191.83 807.29 L2191.82 809.05 L2191.80 810.81 L2191.78 812.57 L2191.75 814.33 L2191.72 816.09 L2191.68 817.85 L2191.65 819.61 L2191.60 821.37 L2191.56 823.13 L2191.51 824.89 L2191.46 826.65 L2191.40 828.41 L2191.34 830.17 L2191.28 831.93 L2191.21 833.69 L2191.14 835.45 L2191.07 837.21 L2190.99 838.97 L2190.91 840.73 L2190.82 842.49 L2190.73 844.25 L2190.64 846.01 L2190.54 847.76 L2190.44 849.52 L2190.34 851.28 L2190.23 853.04 L2190.12 854.79 L2190.00 856.55 L2189.88 858.31 L2189.76 860.06 L2189.63 861.82 L2189.50 863.58 L2189.37 865.33 L2189.23 867.09 L2189.09 868.84 L2188.94 870.60 L2188.79 872.35 L2188.64 874.10 L2188.48 875.86 L2188.32 877.61 L2188.15 879.37 L2187.99 881.12 L2187.81 882.87 L2187.64 884.62 L2187.46 886.37 L2187.27 888.13 L2187.08 889.88 L2186.89 891.63 L2186.69 893.38 L2186.49 895.13 L2186.29 896.88 L2186.08 898.63 L2185.87 900.38 L2185.65 902.12 L2185.43 903.87 L2185.21 905.62 L2184.98 907.37 L2184.75 909.11 L2184.52 910.86 L2184.28 912.60 L2184.03 914.35 L2183.79 916.09 L2183.54 917.84 L2183.28 919.58 L2183.02 921.33 L2182.76 923.07 L2182.49 924.81 L2182.22 926.55 L2181.94 928.29 L2181.66 930.03 L2181.38 931.77 L2181.09 933.51 L2180.80 935.25 L2180.51 936.99 L2180.21 938.73 L2179.90 940.47 L2179.60 942.20 L2179.28 943.94 L2178.97 945.67 L2178.65 947.41 L2178.32 949.14 L2178.00 950.88 L2177.66 952.61 L2177.33 954.34 L2176.99 956.08 L2176.64 957.81 L2176.29 959.54 L2175.94 961.27 L2175.58 962.99 L2175.22 964.72 L2174.85 966.45 L2174.48 968.17 L2174.10 969.90 L2173.71 971.62 L2173.32 973.34 L2172.93 975.06 L2172.53 976.78 L2172.12 978.50 L2171.71 980.21 L2171.30 981.92 L2170.87 983.64 L2170.44 985.35 L2170.01 987.05 L2169.57 988.76 L2169.12 990.47 L2168.66 992.17 L2168.20 993.87 L2167.74 995.57 L2167.26 997.26 L2166.78 998.96 L2166.29 1000.65 L2165.80 1002.34 L2165.29 1004.03 L2164.78 1005.71 L2164.27 1007.39 L2163.74 1009.07 L2163.21 1010.75 L2162.67 1012.42 L2162.12 1014.09 L2161.56 1015.76 L2161.00 1017.43 L2160.43 1019.09 L2159.84 1020.75 L2159.26 1022.40 L2158.66 1024.06 L2158.05 1025.71 L2157.44 1027.35 L2156.81 1029.00 L2156.18 1030.64 L2155.54 1032.27 L2154.89 1033.90 L2154.23 1035.53 L2153.56 1037.16 L2152.88 1038.78 L2152.19 1040.40 L2151.49 1042.01 L2150.78 1043.62 L2150.07 1045.23 L2149.34 1046.83 L2148.60 1048.43 L2147.85 1050.02 L2147.09 1051.61 L2146.33 1053.20 L2145.55 1054.78 L2144.76 1056.36 L2143.96 1057.93 L2143.15 1059.49 L2142.33 1061.05 L2141.50 1062.61 L2140.66 1064.16 L2139.81 1065.70 L2138.95 1067.24 L2138.08 1068.78 L2137.19 1070.30 L2136.30 1071.83 L2135.40 1073.34 L2134.48 1074.85 L2133.56 1076.35 L2132.62 1077.85 L2131.68 1079.34 L2130.72 1080.82 L2129.75 1082.29 L2128.77 1083.76 L2127.78 1085.22 L2126.78 1086.67 L2125.77 1088.12 L2124.75 1089.56 L2123.71 1090.99 L2122.67 1092.41 L2121.62 1093.83 L2120.55 1095.24 L2119.48 1096.64 L2118.41 1098.04 L2117.33 1099.44 L2116.24 1100.84 L2115.15 1102.23 L2114.06 1103.62 L2112.96 1105.01 L2111.86 1106.40 L2110.77 1107.79 L2109.67 1109.18 L2108.56 1110.56 L2107.45 1111.94 L2106.32 1113.30 L2105.19 1114.65 L2104.04 1115.98 L2102.87 1117.29 L2101.69 1118.59 L2100.48 1119.85 L2099.25 1121.09 L2097.99 1122.30 L2096.70 1123.47 L2095.39 1124.61 L2094.04 1125.70 L2092.65 1126.76 L2091.22 1127.77 L2089.76 1128.73 L2088.25 1129.64 L2086.70 1130.50 L2044.5 1130.5 L2044.5 1745 L2075.5 1745 L2075.5 1161.6 L2077.54 1161.61 L2079.56 1161.54 L2081.53 1161.39 L2083.48 1161.18 L2085.39 1160.89 L2087.28 1160.54 L2089.13 1160.12 L2090.95 1159.63 L2092.75 1159.08 L2094.51 1158.48 L2096.25 1157.81 L2097.96 1157.09 L2099.65 1156.31 L2101.31 1155.48 L2102.95 1154.60 L2104.56 1153.67 L2106.15 1152.69 L2107.71 1151.67 L2109.26 1150.60 L2110.78 1149.50 L2112.29 1148.35 L2113.77 1147.17 L2115.24 1145.96 L2116.68 1144.71 L2118.11 1143.43 L2119.53 1142.12 L2120.92 1140.78 L2122.30 1139.42 L2123.67 1138.04 L2125.02 1136.63 L2126.36 1135.21 L2127.69 1133.76 L2129.01 1132.30 L2130.31 1130.83 L2131.61 1129.35 L2132.89 1127.86 L2134.17 1126.36 L2135.43 1124.85 L2136.69 1123.34 L2137.95 1121.83 L2139.19 1120.32 L2140.43 1118.81 L2141.67 1117.30 L2142.89 1115.79 L2144.11 1114.28 L2145.32 1112.76 L2146.52 1111.25 L2147.72 1109.73 L2148.90 1108.21 L2150.08 1106.68 L2151.24 1105.16 L2152.39 1103.62 L2153.53 1102.09 L2154.66 1100.54 L2155.78 1099.00 L2156.89 1097.44 L2157.98 1095.88 L2159.06 1094.32 L2160.12 1092.74 L2161.17 1091.16 L2162.21 1089.57 L2163.23 1087.97 L2164.23 1086.36 L2165.22 1084.74 L2166.20 1083.12 L2167.15 1081.48 L2168.09 1079.83 L2169.01 1078.17 L2169.91 1076.50 L2170.80 1074.82 L2171.67 1073.12 L2172.52 1071.42 L2173.36 1069.71 L2174.18 1067.99 L2174.99 1066.26 L2175.78 1064.52 L2176.56 1062.77 L2177.32 1061.01 L2178.08 1059.25 L2178.82 1057.48 L2179.54 1055.70 L2180.26 1053.92 L2180.96 1052.13 L2181.65 1050.33 L2182.33 1048.53 L2183.01 1046.72 L2183.67 1044.90 L2184.32 1043.09 L2184.96 1041.26 L2185.60 1039.44 L2186.22 1037.61 L2186.84 1035.77 L2187.46 1033.94 L2188.06 1032.10 L2188.66 1030.25 L2189.25 1028.41 L2189.84 1026.56 L2190.42 1024.71 L2191.00 1022.87 L2191.57 1021.02 L2192.14 1019.17 L2192.71 1017.32 L2193.27 1015.47 L2193.83 1013.62 L2194.39 1011.77 L2194.94 1009.92 L2195.49 1008.07 L2196.04 1006.22 L2196.58 1004.37 L2197.13 1002.52 L2197.66 1000.68 L2198.20 998.83 L2198.73 996.98 L2199.25 995.13 L2199.77 993.28 L2200.29 991.43 L2200.80 989.58 L2201.31 987.73 L2201.81 985.88 L2202.31 984.03 L2202.80 982.18 L2203.28 980.32 L2203.76 978.47 L2204.23 976.61 L2204.70 974.76 L2205.16 972.90 L2205.62 971.04 L2206.06 969.18 L2206.50 967.32 L2206.94 965.46 L2207.36 963.59 L2207.78 961.72 L2208.19 959.86 L2208.60 957.99 L2208.99 956.11 L2209.38 954.24 L2209.76 952.36 L2210.13 950.49 L2210.49 948.61 L2210.84 946.72 L2211.19 944.84 L2211.53 942.95 L2211.86 941.07 L2212.18 939.18 L2212.50 937.28 L2212.81 935.39 L2213.11 933.50 L2213.41 931.60 L2213.70 929.70 L2213.98 927.80 L2214.26 925.90 L2214.53 924.00 L2214.80 922.10 L2215.06 920.19 L2215.32 918.29 L2215.58 916.38 L2215.82 914.47 L2216.07 912.56 L2216.31 910.65 L2216.54 908.74 L2216.78 906.83 L2217.01 904.92 L2217.23 903.01 L2217.46 901.10 L2217.68 899.18 L2217.89 897.27 L2218.11 895.36 L2218.32 893.44 L2218.53 891.53 L2218.74 889.61 L2218.95 887.70 L2219.16 885.78 L2219.37 883.87 L2219.57 881.95 L2219.77 880.04 L2219.97 878.12 L2220.17 876.21 L2220.37 874.29 L2220.56 872.38 L2220.75 870.46 L2220.93 868.55 L2221.11 866.63 L2221.29 864.72 L2221.46 862.80 L2221.63 860.88 L2221.79 858.97 L2221.95 857.05 L2222.10 855.14 L2222.24 853.22 L2222.38 851.30 L2222.52 849.39 L2222.64 847.47 L2222.76 845.55 L2222.88 843.64 L2222.99 841.72 L2223.09 839.80 L2223.19 837.88 L2223.28 835.97 L2223.37 834.05 L2223.45 832.13 L2223.52 830.21 L2223.59 828.30 L2223.65 826.38 L2223.71 824.46 L2223.77 822.54 L2223.81 820.63 L2223.86 818.71 L2223.89 816.79 L2223.92 814.87 L2223.95 812.95 L2223.97 811.03 L2223.99 809.12 L2224.00 807.20 L2224.00 805.28 L2224.00 803.36 L2224.00 801.44 L2223.99 799.53 L2223.97 797.61 L2223.95 795.69 L2223.93 793.77 L2223.90 791.85 L2223.86 789.93 L2223.82 788.02 L2223.78 786.10 L2223.73 784.18 L2223.68 782.26 L2223.62 780.34 L2223.56 778.43 L2223.49 776.51 L2223.42 774.59 L2223.35 772.67 L2223.27 770.75 L2223.18 768.84 L2223.09 766.92 L2223.00 765.00 L2222.90 763.08 L2222.80 761.17 L2222.69 759.25 L2222.58 757.33 L2222.47 755.42 L2222.35 753.50 L2222.23 751.58 L2222.10 749.67 L2221.97 747.75 L2221.84 745.83 L2221.70 743.92 L2221.56 742.00 L2221.41 740.09 L2221.26 738.17 L2221.11 736.26 L2220.95 734.34 L2220.79 732.43 L2220.63 730.51 L2220.46 728.60 L2220.29 726.68 L2220.12 724.77 L2219.94 722.85 L2219.76 720.94 L2219.57 719.03 L2219.38 717.11 L2219.19 715.20 L2219.00 713.29 L2218.80 711.37 L2218.60 709.46 L2218.39 707.55 L2218.19 705.64 L2217.98 703.73 L2217.76 701.81 L2217.55 699.90 L2217.33 697.99 L2217.10 696.08 L2216.88 694.17 L2216.65 692.26 L2216.42 690.35 L2216.19 688.44 L2215.95 686.53 L2215.71 684.63 L2215.47 682.72 L2215.22 680.81 L2214.98 678.90 L2214.73 676.99 L2214.48 675.09 L2214.22 673.18 L2213.96 671.27 L2213.71 669.37 L2213.44 667.46 L2213.18 665.56 L2212.91 663.65 L2212.65 661.75 L2212.38 659.84 L2212.10 657.94 L2211.83 656.04 L2211.55 654.13 L2211.27 652.23 L2210.99 650.33 L2210.71 648.43 L2210.43 646.52 L2210.14 644.62 L2209.85 642.72 L2209.56 640.82 L2209.27 638.92 L2208.97 637.02 L2208.68 635.13 L2208.38 633.23 L2208.08 631.33 L2207.78 629.43 L2207.48 627.54 L2207.18 625.64 L2206.87 623.74 L2206.57 621.85 L2206.26 619.95 L2205.95 618.06 L2205.64 616.16 L2205.33 614.27 L2205.01 612.38 L2204.70 610.48 L2204.38 608.59 L2204.06 606.70 L2203.74 604.81 L2203.42 602.92 L2203.09 601.02 L2202.77 599.13 L2202.44 597.24 L2202.11 595.35 L2201.78 593.46 L2201.45 591.57 L2201.11 589.68 L2200.78 587.80 L2200.44 585.91 L2200.10 584.02 L2199.76 582.13 L2199.42 580.24 L2199.07 578.36 L2198.73 576.47 L2198.38 574.58 L2198.03 572.70 L2197.68 570.81 L2197.33 568.92 L2196.98 567.04 L2196.62 565.15 L2196.26 563.27 L2195.90 561.38 L2195.54 559.50 L2195.18 557.61 L2194.81 555.73 L2194.45 553.85 L2194.08 551.96 L2193.71 550.08 L2193.34 548.19 L2192.97 546.31 L2192.59 544.43 L2192.21 542.55 L2191.84 540.66 L2191.46 538.78 L2191.07 536.90 L2190.69 535.02 L2190.30 533.13 L2189.92 531.25 L2189.53 529.37 L2189.14 527.49 L2188.74 525.61 L2188.35 523.72 L2187.95 521.84 L2187.55 519.96 L2187.15 518.08 L2186.75 516.20 L2186.35 514.32 L2185.94 512.44 L2185.54 510.55 L2185.13 508.67 L2184.72 506.79 L2184.32 504.91 L2183.91 503.03 L2183.51 501.15 L2183.10 499.26 L2182.70 497.38 L2182.31 495.50 L2181.92 493.61 L2181.53 491.73 L2181.15 489.84 L2180.77 487.96 L2180.40 486.07 L2180.04 484.18 L2179.69 482.29 L2179.34 480.40 L2179.00 478.51 L2178.68 476.62 L2178.36 474.73 L2178.05 472.83 L2177.76 470.94 L2177.47 469.04 L2177.20 467.14 L2176.94 465.24 L2176.70 463.34 L2176.47 461.43 L2176.25 459.53 L2176.05 457.62 L2175.87 455.71 L2175.70 453.80 L2320 429.2 Z" fill="url(#dots)"/>
<path d="M782.5 1745 L782.5 415 L783.15 414.96 L783.81 414.92 L784.46 414.87 L785.12 414.83 L785.77 414.79 L786.43 414.74 L787.08 414.70 L787.74 414.65 L788.39 414.61 L789.04 414.56 L789.70 414.51 L790.35 414.47 L791.01 414.42 L791.66 414.37 L792.31 414.32 L792.97 414.27 L793.62 414.22 L794.27 414.17 L794.93 414.11 L795.58 414.06 L796.23 414.01 L796.88 413.96 L797.54 413.90 L798.19 413.85 L798.84 413.79 L799.49 413.73 L800.15 413.68 L800.80 413.62 L801.45 413.56 L802.10 413.51 L802.76 413.45 L803.41 413.39 L804.06 413.33 L804.71 413.27 L805.36 413.21 L806.02 413.15 L806.67 413.08 L807.32 413.02 L807.97 412.96 L808.62 412.89 L809.27 412.83 L809.92 412.77 L810.57 412.70 L811.23 412.63 L811.88 412.57 L812.53 412.50 L813.18 412.43 L813.83 412.37 L814.48 412.30 L815.13 412.23 L815.78 412.16 L816.43 412.09 L817.08 412.02 L817.73 411.95 L818.38 411.88 L819.03 411.80 L819.68 411.73 L820.33 411.66 L820.98 411.58 L821.63 411.51 L822.28 411.44 L822.93 411.36 L823.58 411.28 L824.23 411.21 L824.88 411.13 L825.53 411.05 L826.17 410.98 L826.82 410.90 L827.47 410.82 L828.12 410.74 L828.77 410.66 L829.42 410.58 L830.07 410.50 L830.72 410.42 L831.36 410.34 L832.01 410.26 L832.66 410.17 L833.31 410.09 L833.96 410.01 L834.61 409.92 L835.25 409.84 L835.90 409.75 L836.55 409.67 L837.20 409.58 L837.85 409.50 L838.49 409.41 L839.14 409.32 L839.79 409.23 L840.44 409.15 L841.08 409.06 L841.73 408.97 L842.38 408.88 L843.03 408.79 L843.67 408.70 L844.32 408.61 L844.97 408.51 L845.61 408.42 L846.26 408.33 L846.91 408.24 L847.55 408.14 L848.20 408.05 L848.85 407.96 L849.49 407.86 L850.14 407.77 L850.79 407.67 L851.43 407.58 L852.08 407.48 L852.73 407.38 L853.37 407.29 L854.02 407.19 L854.66 407.09 L855.31 406.99 L855.96 406.89 L856.60 406.79 L857.25 406.69 L857.89 406.59 L858.54 406.49 L859.19 406.39 L859.83 406.29 L860.48 406.19 L861.12 406.09 L861.77 405.98 L862.41 405.88 L863.06 405.78 L863.70 405.67 L864.35 405.57 L864.99 405.47 L865.64 405.36 L866.28 405.26 L866.93 405.15 L867.57 405.04 L868.22 404.94 L868.86 404.83 L869.51 404.72 L870.15 404.61 L870.80 404.51 L871.44 404.40 L872.09 404.29 L872.73 404.18 L873.37 404.07 L874.02 403.96 L874.66 403.85 L875.31 403.74 L875.95 403.63 L876.60 403.52 L877.24 403.40 L877.88 403.29 L878.53 403.18 L879.17 403.07 L879.82 402.95 L880.46 402.84 L881.10 402.73 L881.75 402.61 L882.39 402.50 L883.03 402.38 L883.68 402.27 L884.32 402.15 L884.96 402.03 L885.61 401.92 L886.25 401.80 L886.89 401.68 L887.54 401.57 L888.18 401.45 L888.82 401.33 L889.47 401.21 L890.11 401.09 L890.75 400.97 L891.40 400.85 L892.04 400.73 L892.68 400.61 L893.33 400.49 L893.97 400.37 L894.61 400.25 L895.25 400.13 L895.90 400.01 L896.54 399.88 L897.18 399.76 L897.82 399.64 L898.47 399.52 L899.11 399.39 L899.75 399.27 L900.39 399.14 L901.04 399.02 L901.68 398.89 L902.32 398.77 L902.96 398.64 L903.61 398.52 L904.25 398.39 L904.89 398.27 L905.53 398.14 L906.17 398.01 L906.82 397.89 L907.46 397.76 L908.10 397.63 L908.74 397.50 L909.38 397.37 L910.03 397.25 L910.67 397.12 L911.31 396.99 L911.95 396.86 L912.59 396.73 L913.23 396.60 L913.88 396.47 L914.52 396.34 L915.16 396.21 L915.80 396.08 L916.44 395.94 L917.08 395.81 L917.72 395.68 L918.37 395.55 L919.01 395.42 L919.65 395.28 L920.29 395.15 L920.93 395.02 L921.57 394.88 L922.21 394.75 L922.85 394.62 L923.50 394.48 L924.14 394.35 L924.78 394.21 L925.42 394.08 L926.06 393.94 L926.70 393.81 L927.34 393.67 L927.98 393.54 L928.62 393.40 L929.26 393.26 L929.90 393.13 L930.55 392.99 L931.19 392.85 L931.83 392.72 L932.47 392.58 L933.11 392.44 L933.75 392.30 L934.39 392.16 L935.03 392.02 L935.67 391.89 L936.31 391.75 L936.95 391.61 L937.59 391.47 L938.23 391.33 L938.87 391.19 L939.51 391.05 L940.15 390.91 L940.80 390.77 L941.44 390.63 L942.08 390.49 L942.72 390.35 L943.36 390.21 L944.00 390.06 L944.64 389.92 L945.28 389.78 L945.92 389.64 L946.56 389.50 L947.20 389.35 L947.84 389.21 L948.48 389.07 L949.12 388.93 L949.76 388.78 L950.40 388.64 L951.04 388.50 L951.68 388.35 L952.32 388.21 L952.96 388.06 L953.60 387.92 L954.24 387.77 L954.88 387.63 L955.52 387.49 L956.16 387.34 L956.80 387.20 L957.44 387.05 L958.08 386.90 L958.72 386.76 L959.36 386.61 L960.00 386.47 L960.64 386.32 L961.28 386.17 L961.92 386.02 L962.56 385.88 L963.20 385.73 L963.84 385.58 L964.47 385.43 L965.11 385.28 L965.75 385.13 L966.39 384.98 L967.03 384.83 L967.67 384.68 L968.30 384.52 L968.94 384.37 L969.58 384.22 L970.22 384.06 L970.86 383.91 L971.49 383.75 L972.13 383.60 L972.77 383.44 L973.40 383.29 L974.04 383.13 L974.67 382.97 L975.31 382.81 L975.95 382.65 L976.58 382.49 L977.22 382.33 L977.85 382.16 L978.48 382.00 L979.12 381.84 L979.75 381.67 L980.39 381.51 L981.02 381.34 L981.65 381.17 L982.28 381.00 L982.92 380.83 L983.55 380.66 L984.18 380.49 L984.81 380.32 L985.44 380.15 L986.07 379.97 L986.70 379.80 L987.33 379.62 L987.96 379.44 L988.59 379.26 L989.22 379.08 L989.84 378.90 L990.47 378.72 L991.10 378.54 L991.72 378.35 L992.35 378.17 L992.97 377.98 L993.60 377.79 L994.22 377.60 L994.85 377.41 L995.47 377.22 L996.10 377.02 L996.72 376.83 L997.34 376.63 L997.96 376.43 L998.58 376.24 L999.20 376.03 L999.82 375.83 L1000.44 375.63 L1001.06 375.42 L1001.68 375.22 L1002.30 375.01 L1002.91 374.80 L1003.53 374.59 L1004.15 374.38 L1004.76 374.16 L1005.38 373.95 L1005.99 373.73 L1006.60 373.51 L1007.22 373.29 L1007.83 373.07 L1008.44 372.85 L1009.05 372.62 L1009.66 372.39 L1010.27 372.16 L1010.88 371.93 L1011.49 371.70 L1012.09 371.47 L1012.70 371.23 L1013.31 370.99 L1013.91 370.75 L1014.52 370.51 L1015.12 370.27 L1015.72 370.02 L1016.33 369.77 L1016.93 369.53 L1017.53 369.27 L1018.13 369.02 L1018.73 368.77 L1019.32 368.51 L1019.92 368.25 L1020.52 367.99 L1021.12 367.73 L1021.71 367.46 L1022.30 367.19 L1022.90 366.92 L1023.49 366.65 L1024.08 366.38 L1024.67 366.10 L1025.26 365.82 L1025.85 365.54 L1026.44 365.26 L1027.03 364.98 L1027.61 364.69 L1028.20 364.40 L1028.79 364.11 L1029.37 363.81 L1029.95 363.52 L1030.53 363.22 L1031.11 362.92 L1031.69 362.61 L1032.27 362.31 L1032.85 362.00 L1033.43 361.69 L1034.01 361.38 L1034.58 361.06 L1035.15 360.74 L1035.73 360.42 L1036.30 360.10 L1047 351.2 L1604.9 450 L1605.9 482 L1598 515.8 L1590 560 L1589.66 561.53 L1589.32 563.05 L1588.99 564.58 L1588.65 566.10 L1588.32 567.63 L1587.99 569.16 L1587.66 570.69 L1587.34 572.22 L1587.01 573.74 L1586.69 575.27 L1586.37 576.80 L1586.05 578.33 L1585.73 579.86 L1585.41 581.39 L1585.10 582.92 L1584.78 584.45 L1584.47 585.98 L1584.16 587.51 L1583.86 589.05 L1583.55 590.58 L1583.25 592.11 L1582.94 593.64 L1582.64 595.17 L1582.34 596.71 L1582.05 598.24 L1581.75 599.78 L1581.46 601.31 L1581.16 602.84 L1580.87 604.38 L1580.59 605.91 L1580.30 607.45 L1580.01 608.98 L1579.73 610.52 L1579.45 612.06 L1579.17 613.59 L1578.89 615.13 L1578.61 616.67 L1578.34 618.20 L1578.06 619.74 L1577.79 621.28 L1577.52 622.82 L1577.25 624.36 L1576.99 625.89 L1576.72 627.43 L1576.46 628.97 L1576.19 630.51 L1575.93 632.05 L1575.68 633.59 L1575.42 635.13 L1575.16 636.67 L1574.91 638.21 L1574.66 639.75 L1574.41 641.30 L1574.16 642.84 L1573.91 644.38 L1573.67 645.92 L1573.42 647.46 L1573.18 649.01 L1572.94 650.55 L1572.70 652.09 L1572.46 653.64 L1572.23 655.18 L1571.99 656.72 L1571.76 658.27 L1571.53 659.81 L1571.30 661.36 L1571.07 662.90 L1570.85 664.45 L1570.62 665.99 L1570.40 667.54 L1570.18 669.09 L1569.96 670.63 L1569.74 672.18 L1569.52 673.72 L1569.31 675.27 L1569.10 676.82 L1568.88 678.37 L1568.67 679.91 L1568.46 681.46 L1568.26 683.01 L1568.05 684.56 L1567.85 686.11 L1567.65 687.65 L1567.44 689.20 L1567.25 690.75 L1567.05 692.30 L1566.85 693.85 L1566.66 695.40 L1566.46 696.95 L1566.27 698.50 L1566.08 700.05 L1565.89 701.60 L1565.71 703.15 L1565.52 704.71 L1565.34 706.26 L1565.15 707.81 L1564.97 709.36 L1564.79 710.91 L1564.61 712.46 L1564.44 714.02 L1564.26 715.57 L1564.09 717.12 L1563.92 718.67 L1563.75 720.23 L1563.58 721.78 L1563.41 723.33 L1563.24 724.89 L1563.08 726.44 L1562.92 727.99 L1562.76 729.55 L1562.60 731.10 L1562.44 732.66 L1562.28 734.21 L1562.12 735.77 L1561.97 737.32 L1561.82 738.88 L1561.67 740.43 L1561.52 741.99 L1561.37 743.54 L1561.22 745.10 L1561.07 746.66 L1560.93 748.21 L1560.79 749.77 L1560.65 751.33 L1560.51 752.88 L1560.37 754.44 L1560.23 756.00 L1560.10 757.55 L1559.96 759.11 L1559.83 760.67 L1559.70 762.23 L1559.58 763.78 L1559.45 765.34 L1559.33 766.90 L1559.21 768.46 L1559.09 770.02 L1558.97 771.58 L1558.86 773.13 L1558.74 774.69 L1558.64 776.25 L1558.53 777.81 L1558.43 779.37 L1558.32 780.93 L1558.23 782.49 L1558.13 784.05 L1558.04 785.61 L1557.95 787.17 L1557.87 788.72 L1557.79 790.28 L1557.71 791.84 L1557.63 793.40 L1557.56 794.96 L1557.49 796.52 L1557.43 798.08 L1557.37 799.64 L1557.31 801.20 L1557.26 802.76 L1557.21 804.32 L1557.17 805.88 L1557.13 807.44 L1557.09 809.00 L1557.06 810.56 L1557.04 812.12 L1557.01 813.69 L1557.00 815.25 L1556.98 816.81 L1556.98 818.37 L1556.97 819.93 L1556.97 821.49 L1556.98 823.05 L1556.99 824.61 L1557.01 826.17 L1557.03 827.73 L1557.06 829.29 L1557.09 830.85 L1557.13 832.41 L1557.18 833.97 L1557.23 835.53 L1557.28 837.09 L1557.34 838.65 L1557.41 840.21 L1557.48 841.77 L1557.56 843.33 L1557.65 844.89 L1557.74 846.45 L1557.84 848.01 L1557.94 849.57 L1558.05 851.13 L1558.17 852.69 L1558.29 854.25 L1558.41 855.81 L1558.54 857.37 L1558.67 858.93 L1558.80 860.49 L1558.94 862.05 L1559.08 863.61 L1559.22 865.16 L1559.37 866.72 L1559.51 868.28 L1559.65 869.84 L1559.80 871.40 L1559.94 872.96 L1560.09 874.51 L1560.23 876.07 L1560.37 877.63 L1560.51 879.19 L1560.65 880.74 L1560.78 882.30 L1560.91 883.86 L1561.04 885.42 L1561.17 886.97 L1561.30 888.53 L1561.42 890.08 L1561.55 891.64 L1561.68 893.20 L1561.80 894.75 L1561.93 896.31 L1562.06 897.86 L1562.19 899.42 L1562.32 900.97 L1562.45 902.52 L1562.58 904.08 L1562.72 905.63 L1562.86 907.19 L1563.00 908.74 L1563.14 910.29 L1563.29 911.85 L1563.45 913.40 L1563.60 914.95 L1563.76 916.50 L1563.93 918.06 L1564.10 919.61 L1564.27 921.16 L1564.45 922.71 L1564.63 924.26 L1564.81 925.81 L1565.00 927.36 L1565.19 928.91 L1565.39 930.46 L1565.59 932.01 L1565.79 933.56 L1566.00 935.10 L1566.21 936.65 L1566.43 938.20 L1566.64 939.75 L1566.87 941.29 L1567.09 942.84 L1567.32 944.39 L1567.56 945.93 L1567.80 947.47 L1568.04 949.02 L1568.28 950.56 L1568.53 952.11 L1568.78 953.65 L1569.04 955.19 L1569.30 956.73 L1569.56 958.27 L1569.83 959.81 L1570.10 961.35 L1570.38 962.89 L1570.66 964.43 L1570.94 965.97 L1571.22 967.51 L1571.51 969.05 L1571.80 970.58 L1572.10 972.12 L1572.40 973.65 L1572.70 975.19 L1573.01 976.72 L1573.32 978.25 L1573.63 979.79 L1573.95 981.32 L1574.27 982.85 L1574.60 984.38 L1574.92 985.91 L1575.26 987.44 L1575.59 988.97 L1575.93 990.49 L1576.27 992.02 L1576.61 993.54 L1576.96 995.07 L1577.31 996.59 L1577.67 998.12 L1578.03 999.64 L1578.39 1001.16 L1578.76 1002.68 L1579.12 1004.20 L1579.50 1005.72 L1579.87 1007.24 L1580.25 1008.76 L1580.63 1010.27 L1581.02 1011.79 L1581.41 1013.30 L1581.80 1014.81 L1582.20 1016.33 L1582.60 1017.84 L1583.00 1019.35 L1583.41 1020.85 L1583.82 1022.36 L1584.24 1023.86 L1584.67 1025.37 L1585.10 1026.87 L1585.53 1028.37 L1585.97 1029.87 L1586.41 1031.36 L1586.86 1032.86 L1587.31 1034.35 L1587.77 1035.84 L1588.24 1037.33 L1588.71 1038.81 L1589.19 1040.30 L1589.67 1041.78 L1590.16 1043.26 L1590.66 1044.74 L1591.16 1046.21 L1591.67 1047.68 L1592.19 1049.15 L1592.71 1050.62 L1593.24 1052.08 L1593.78 1053.54 L1594.32 1055.00 L1594.88 1056.45 L1595.44 1057.90 L1596.00 1059.35 L1596.58 1060.80 L1597.16 1062.24 L1597.75 1063.68 L1598.35 1065.12 L1598.96 1066.55 L1599.58 1067.98 L1600.20 1069.40 L1600.84 1070.83 L1601.48 1072.24 L1602.13 1073.66 L1602.79 1075.07 L1603.46 1076.48 L1604.14 1077.88 L1604.83 1079.28 L1605.53 1080.67 L1606.23 1082.07 L1606.95 1083.45 L1607.68 1084.84 L1608.42 1086.21 L1609.16 1087.59 L1609.92 1088.96 L1610.69 1090.32 L1611.46 1091.68 L1612.24 1093.04 L1613.04 1094.39 L1613.84 1095.74 L1614.65 1097.08 L1615.47 1098.42 L1616.30 1099.75 L1617.13 1101.08 L1617.98 1102.40 L1618.83 1103.72 L1619.69 1105.03 L1620.56 1106.34 L1621.44 1107.64 L1622.32 1108.94 L1623.21 1110.23 L1624.11 1111.52 L1625.02 1112.80 L1625.93 1114.08 L1626.86 1115.35 L1627.79 1116.61 L1628.72 1117.87 L1629.66 1119.13 L1630.61 1120.37 L1631.57 1121.62 L1632.53 1122.85 L1633.50 1124.08 L1634.48 1125.31 L1635.46 1126.53 L1636.45 1127.74 L1637.44 1128.95 L1638.44 1130.15 L1639.45 1131.34 L1640.46 1132.53 L1641.47 1133.71 L1642.50 1134.88 L1643.52 1136.05 L1644.56 1137.21 L1645.60 1138.37 L1646.65 1139.51 L1647.71 1140.64 L1648.78 1141.76 L1649.87 1142.86 L1650.97 1143.94 L1652.09 1145.01 L1653.23 1146.06 L1654.39 1147.08 L1655.57 1148.08 L1656.77 1149.06 L1658.00 1150.00 L1659.26 1150.93 L1660.54 1151.82 L1661.85 1152.67 L1663.20 1153.50 L1706.5 1153.5 L1706.5 1745" fill="none" stroke="#000" stroke-width="3" stroke-linejoin="miter"/>
<path d="M782.5 446.2 L783.21 446.18 L783.92 446.16 L784.62 446.14 L785.33 446.12 L786.04 446.09 L786.75 446.07 L787.46 446.04 L788.16 446.02 L788.87 445.99 L789.58 445.96 L790.28 445.93 L790.99 445.90 L791.70 445.87 L792.40 445.83 L793.11 445.80 L793.81 445.76 L794.52 445.72 L795.22 445.69 L795.93 445.65 L796.63 445.61 L797.34 445.56 L798.04 445.52 L798.75 445.48 L799.45 445.43 L800.15 445.39 L800.86 445.34 L801.56 445.29 L802.27 445.24 L802.97 445.19 L803.67 445.14 L804.38 445.09 L805.08 445.04 L805.78 444.98 L806.48 444.93 L807.19 444.87 L807.89 444.82 L808.59 444.76 L809.29 444.70 L809.99 444.64 L810.69 444.58 L811.40 444.52 L812.10 444.45 L812.80 444.39 L813.50 444.32 L814.20 444.26 L814.90 444.19 L815.60 444.12 L816.30 444.05 L817.00 443.98 L817.70 443.91 L818.40 443.84 L819.10 443.77 L819.80 443.69 L820.50 443.62 L821.20 443.54 L821.90 443.47 L822.60 443.39 L823.29 443.31 L823.99 443.23 L824.69 443.15 L825.39 443.07 L826.09 442.99 L826.79 442.91 L827.48 442.82 L828.18 442.74 L828.88 442.65 L829.58 442.57 L830.27 442.48 L830.97 442.39 L831.67 442.30 L832.36 442.21 L833.06 442.12 L833.76 442.03 L834.45 441.94 L835.15 441.85 L835.85 441.75 L836.54 441.66 L837.24 441.56 L837.93 441.47 L838.63 441.37 L839.33 441.27 L840.02 441.17 L840.72 441.07 L841.41 440.97 L842.11 440.87 L842.80 440.77 L843.50 440.67 L844.19 440.56 L844.89 440.46 L845.58 440.36 L846.27 440.25 L846.97 440.14 L847.66 440.04 L848.36 439.93 L849.05 439.82 L849.74 439.71 L850.44 439.60 L851.13 439.49 L851.82 439.38 L852.52 439.27 L853.21 439.15 L853.90 439.04 L854.60 438.93 L855.29 438.81 L855.98 438.69 L856.67 438.58 L857.37 438.46 L858.06 438.34 L858.75 438.23 L859.44 438.11 L860.14 437.99 L860.83 437.87 L861.52 437.75 L862.21 437.62 L862.90 437.50 L863.60 437.38 L864.29 437.26 L864.98 437.13 L865.67 437.01 L866.36 436.88 L867.05 436.75 L867.74 436.63 L868.43 436.50 L869.12 436.37 L869.82 436.24 L870.51 436.12 L871.20 435.99 L871.89 435.86 L872.58 435.73 L873.27 435.59 L873.96 435.46 L874.65 435.33 L875.34 435.20 L876.03 435.06 L876.72 434.93 L877.41 434.79 L878.10 434.66 L878.79 434.52 L879.48 434.39 L880.17 434.25 L880.86 434.11 L881.54 433.98 L882.23 433.84 L882.92 433.70 L883.61 433.56 L884.30 433.42 L884.99 433.28 L885.68 433.14 L886.37 433.00 L887.06 432.86 L887.75 432.71 L888.43 432.57 L889.12 432.43 L889.81 432.29 L890.50 432.14 L891.19 432.00 L891.88 431.85 L892.56 431.71 L893.25 431.56 L893.94 431.42 L894.63 431.27 L895.32 431.12 L896.01 430.97 L896.69 430.83 L897.38 430.68 L898.07 430.53 L898.76 430.38 L899.44 430.23 L900.13 430.08 L900.82 429.93 L901.51 429.78 L902.19 429.63 L902.88 429.48 L903.57 429.33 L904.26 429.18 L904.94 429.02 L905.63 428.87 L906.32 428.72 L907.01 428.57 L907.69 428.41 L908.38 428.26 L909.07 428.10 L909.75 427.95 L910.44 427.80 L911.13 427.64 L911.81 427.48 L912.50 427.33 L913.19 427.17 L913.87 427.02 L914.56 426.86 L915.25 426.70 L915.93 426.55 L916.62 426.39 L917.31 426.23 L917.99 426.07 L918.68 425.91 L919.37 425.76 L920.05 425.60 L920.74 425.44 L921.43 425.28 L922.11 425.12 L922.80 424.96 L923.49 424.80 L924.17 424.64 L924.86 424.48 L925.54 424.32 L926.23 424.16 L926.92 424.00 L927.60 423.84 L928.29 423.68 L928.98 423.52 L929.66 423.35 L930.35 423.19 L931.03 423.03 L931.72 422.87 L932.41 422.71 L933.09 422.54 L933.78 422.38 L934.46 422.22 L935.15 422.06 L935.84 421.89 L936.52 421.73 L937.21 421.57 L937.89 421.40 L938.58 421.24 L939.27 421.08 L939.95 420.91 L940.64 420.75 L941.32 420.58 L942.01 420.42 L942.70 420.26 L943.38 420.09 L944.07 419.93 L944.76 419.76 L945.44 419.60 L946.13 419.44 L946.81 419.27 L947.50 419.11 L948.19 418.94 L948.87 418.78 L949.56 418.61 L950.24 418.45 L950.93 418.28 L951.62 418.12 L952.30 417.95 L952.99 417.79 L953.67 417.62 L954.36 417.46 L955.05 417.30 L955.73 417.13 L956.42 416.97 L957.10 416.80 L957.79 416.64 L958.48 416.47 L959.16 416.31 L959.85 416.14 L960.54 415.98 L961.22 415.81 L961.91 415.64 L962.59 415.48 L963.28 415.31 L963.97 415.15 L964.65 414.98 L965.34 414.81 L966.02 414.65 L966.71 414.48 L967.39 414.31 L968.08 414.15 L968.77 413.98 L969.45 413.81 L970.14 413.64 L970.82 413.47 L971.51 413.31 L972.19 413.14 L972.88 412.97 L973.56 412.80 L974.24 412.63 L974.93 412.46 L975.61 412.28 L976.30 412.11 L976.98 411.94 L977.66 411.77 L978.35 411.60 L979.03 411.42 L979.71 411.25 L980.40 411.07 L981.08 410.90 L981.76 410.72 L982.44 410.55 L983.13 410.37 L983.81 410.19 L984.49 410.01 L985.17 409.84 L985.85 409.66 L986.53 409.48 L987.22 409.30 L987.90 409.12 L988.58 408.93 L989.26 408.75 L989.94 408.57 L990.62 408.38 L991.30 408.20 L991.97 408.01 L992.65 407.83 L993.33 407.64 L994.01 407.45 L994.69 407.27 L995.37 407.08 L996.04 406.89 L996.72 406.69 L997.40 406.50 L998.07 406.31 L998.75 406.12 L999.42 405.92 L1000.10 405.73 L1000.78 405.53 L1001.45 405.33 L1002.12 405.13 L1002.80 404.93 L1003.47 404.73 L1004.14 404.53 L1004.82 404.33 L1005.49 404.13 L1006.16 403.92 L1006.83 403.72 L1007.51 403.51 L1008.18 403.30 L1008.85 403.09 L1009.52 402.88 L1010.19 402.67 L1010.86 402.46 L1011.52 402.25 L1012.19 402.03 L1012.86 401.82 L1013.53 401.60 L1014.20 401.38 L1014.86 401.16 L1015.53 400.94 L1016.19 400.72 L1016.86 400.50 L1017.52 400.27 L1018.19 400.05 L1018.85 399.82 L1019.51 399.59 L1020.18 399.36 L1020.84 399.13 L1021.50 398.90 L1022.16 398.67 L1022.82 398.43 L1023.48 398.19 L1024.14 397.96 L1024.80 397.72 L1025.46 397.48 L1026.12 397.23 L1026.78 396.99 L1027.43 396.74 L1028.09 396.50 L1028.74 396.25 L1029.40 396.00 L1030.05 395.75 L1030.71 395.50 L1031.36 395.24 L1032.01 394.98 L1032.67 394.73 L1033.32 394.47 L1033.97 394.21 L1034.62 393.94 L1035.27 393.68 L1035.92 393.41 L1036.57 393.15 L1037.21 392.88 L1037.86 392.61 L1038.51 392.33 L1039.15 392.06 L1039.80 391.78 L1040.44 391.50 L1041.08 391.22 L1041.73 390.93 L1042.37 390.65 L1043.01 390.36 L1043.65 390.07 L1044.28 389.77 L1044.92 389.48 L1045.55 389.18 L1046.19 388.88 L1046.82 388.57 L1047.45 388.26 L1048.08 387.95 L1048.71 387.64 L1049.34 387.32 L1049.96 387.00 L1050.58 386.67 L1051.21 386.35 L1051.83 386.01 L1052.44 385.68 L1053.06 385.34 L1053.68 385.00 L1054.29 384.65 L1054.90 384.30 L1574.2 476.1 L1573.87 477.99 L1573.53 479.89 L1573.20 481.78 L1572.86 483.67 L1572.52 485.57 L1572.18 487.46 L1571.84 489.35 L1571.49 491.24 L1571.15 493.14 L1570.80 495.03 L1570.45 496.92 L1570.10 498.81 L1569.75 500.70 L1569.40 502.60 L1569.04 504.49 L1568.69 506.38 L1568.33 508.27 L1567.98 510.16 L1567.62 512.05 L1567.26 513.94 L1566.90 515.83 L1566.54 517.72 L1566.18 519.61 L1565.81 521.51 L1565.45 523.40 L1565.08 525.29 L1564.72 527.18 L1564.35 529.07 L1563.99 530.96 L1563.62 532.85 L1563.25 534.74 L1562.89 536.63 L1562.52 538.52 L1562.15 540.41 L1561.78 542.30 L1561.41 544.19 L1561.04 546.08 L1560.67 547.97 L1560.30 549.86 L1559.93 551.75 L1559.56 553.64 L1559.19 555.53 L1558.82 557.42 L1558.45 559.31 L1558.08 561.20 L1557.71 563.09 L1557.34 564.98 L1556.97 566.87 L1556.60 568.76 L1556.23 570.65 L1555.86 572.54 L1555.49 574.43 L1555.13 576.32 L1554.76 578.21 L1554.39 580.10 L1554.02 581.99 L1553.66 583.88 L1553.29 585.78 L1552.93 587.67 L1552.56 589.56 L1552.20 591.45 L1551.84 593.34 L1551.48 595.23 L1551.12 597.13 L1550.76 599.02 L1550.40 600.91 L1550.04 602.80 L1549.68 604.69 L1549.33 606.59 L1548.97 608.48 L1548.62 610.37 L1548.27 612.27 L1547.92 614.16 L1547.57 616.05 L1547.22 617.95 L1546.87 619.84 L1546.53 621.74 L1546.18 623.63 L1545.84 625.53 L1545.50 627.42 L1545.16 629.32 L1544.82 631.21 L1544.49 633.11 L1544.15 635.00 L1543.82 636.90 L1543.49 638.80 L1543.16 640.69 L1542.84 642.59 L1542.51 644.49 L1542.19 646.38 L1541.87 648.28 L1541.55 650.18 L1541.23 652.08 L1540.92 653.98 L1540.61 655.88 L1540.30 657.78 L1539.99 659.68 L1539.69 661.58 L1539.38 663.48 L1539.08 665.38 L1538.79 667.28 L1538.49 669.18 L1538.20 671.08 L1537.91 672.98 L1537.62 674.89 L1537.34 676.79 L1537.05 678.69 L1536.77 680.60 L1536.50 682.50 L1536.23 684.41 L1535.95 686.31 L1535.69 688.22 L1535.42 690.12 L1535.16 692.03 L1534.90 693.94 L1534.65 695.84 L1534.40 697.75 L1534.15 699.66 L1533.90 701.57 L1533.66 703.48 L1533.42 705.38 L1533.18 707.29 L1532.95 709.20 L1532.72 711.12 L1532.50 713.03 L1532.28 714.94 L1532.06 716.85 L1531.84 718.76 L1531.63 720.68 L1531.43 722.59 L1531.22 724.50 L1531.02 726.42 L1530.83 728.33 L1530.63 730.25 L1530.45 732.17 L1530.26 734.08 L1530.08 736.00 L1529.90 737.92 L1529.73 739.84 L1529.56 741.75 L1529.40 743.67 L1529.23 745.59 L1529.08 747.51 L1528.92 749.43 L1528.77 751.35 L1528.63 753.27 L1528.49 755.19 L1528.35 757.11 L1528.21 759.03 L1528.08 760.96 L1527.96 762.88 L1527.83 764.80 L1527.72 766.72 L1527.60 768.64 L1527.49 770.57 L1527.39 772.49 L1527.28 774.41 L1527.19 776.34 L1527.09 778.26 L1527.00 780.18 L1526.92 782.11 L1526.83 784.03 L1526.76 785.96 L1526.68 787.88 L1526.61 789.81 L1526.55 791.73 L1526.49 793.66 L1526.43 795.58 L1526.38 797.51 L1526.33 799.43 L1526.29 801.36 L1526.25 803.28 L1526.21 805.21 L1526.18 807.13 L1526.15 809.06 L1526.13 810.98 L1526.11 812.91 L1526.10 814.84 L1526.09 816.76 L1526.08 818.69 L1526.08 820.61 L1526.08 822.54 L1526.09 824.46 L1526.10 826.39 L1526.12 828.31 L1526.14 830.24 L1526.17 832.16 L1526.20 834.09 L1526.23 836.01 L1526.27 837.94 L1526.31 839.86 L1526.36 841.78 L1526.41 843.71 L1526.47 845.63 L1526.53 847.56 L1526.59 849.48 L1526.66 851.40 L1526.74 853.33 L1526.82 855.25 L1526.90 857.17 L1526.99 859.09 L1527.08 861.02 L1527.18 862.94 L1527.28 864.86 L1527.39 866.78 L1527.50 868.70 L1527.62 870.62 L1527.74 872.54 L1527.86 874.46 L1527.99 876.38 L1528.13 878.30 L1528.27 880.22 L1528.41 882.14 L1528.56 884.06 L1528.72 885.97 L1528.88 887.89 L1529.04 889.81 L1529.21 891.72 L1529.38 893.64 L1529.56 895.55 L1529.74 897.47 L1529.93 899.38 L1530.12 901.30 L1530.32 903.21 L1530.52 905.12 L1530.73 907.04 L1530.94 908.95 L1531.16 910.86 L1531.38 912.77 L1531.61 914.68 L1531.84 916.59 L1532.08 918.50 L1532.32 920.41 L1532.57 922.32 L1532.82 924.22 L1533.08 926.13 L1533.34 928.04 L1533.61 929.94 L1533.88 931.85 L1534.15 933.75 L1534.44 935.66 L1534.72 937.56 L1535.02 939.46 L1535.31 941.36 L1535.62 943.26 L1535.93 945.16 L1536.24 947.06 L1536.56 948.96 L1536.88 950.86 L1537.21 952.75 L1537.54 954.65 L1537.88 956.55 L1538.22 958.44 L1538.57 960.33 L1538.92 962.23 L1539.28 964.12 L1539.64 966.01 L1540.01 967.90 L1540.38 969.80 L1540.75 971.69 L1541.13 973.57 L1541.52 975.46 L1541.90 977.35 L1542.30 979.24 L1542.69 981.13 L1543.09 983.01 L1543.50 984.90 L1543.91 986.78 L1544.32 988.67 L1544.74 990.55 L1545.16 992.43 L1545.58 994.32 L1546.01 996.20 L1546.44 998.08 L1546.88 999.96 L1547.32 1001.84 L1547.76 1003.72 L1548.21 1005.60 L1548.66 1007.48 L1549.12 1009.36 L1549.57 1011.23 L1550.04 1013.11 L1550.50 1014.99 L1550.97 1016.86 L1551.45 1018.73 L1551.93 1020.60 L1552.42 1022.47 L1552.91 1024.34 L1553.41 1026.20 L1553.92 1028.07 L1554.43 1029.93 L1554.95 1031.78 L1555.48 1033.64 L1556.02 1035.49 L1556.56 1037.34 L1557.11 1039.18 L1557.67 1041.02 L1558.24 1042.86 L1558.82 1044.70 L1559.41 1046.52 L1560.01 1048.35 L1560.62 1050.17 L1561.24 1051.99 L1561.87 1053.80 L1562.52 1055.60 L1563.17 1057.41 L1563.84 1059.20 L1564.52 1060.99 L1565.21 1062.78 L1565.91 1064.56 L1566.62 1066.33 L1567.35 1068.10 L1568.09 1069.86 L1568.84 1071.62 L1569.60 1073.37 L1570.38 1075.12 L1571.16 1076.86 L1571.96 1078.60 L1572.76 1080.33 L1573.58 1082.06 L1574.41 1083.79 L1575.25 1085.51 L1576.09 1087.22 L1576.95 1088.93 L1577.82 1090.64 L1578.70 1092.34 L1579.58 1094.04 L1580.48 1095.74 L1581.39 1097.43 L1582.30 1099.12 L1583.22 1100.81 L1584.15 1102.49 L1585.09 1104.17 L1586.04 1105.84 L1587.00 1107.51 L1587.96 1109.18 L1588.94 1110.85 L1589.92 1112.51 L1590.90 1114.17 L1591.90 1115.83 L1592.90 1117.49 L1593.91 1119.14 L1594.93 1120.78 L1595.96 1122.43 L1597.00 1124.07 L1598.05 1125.70 L1599.10 1127.33 L1600.17 1128.96 L1601.24 1130.58 L1602.33 1132.19 L1603.42 1133.80 L1604.53 1135.40 L1605.65 1137.00 L1606.78 1138.59 L1607.92 1140.17 L1609.07 1141.74 L1610.23 1143.31 L1611.41 1144.87 L1612.60 1146.42 L1613.80 1147.96 L1615.01 1149.49 L1616.24 1151.02 L1617.48 1152.53 L1618.74 1154.03 L1620.01 1155.51 L1621.29 1156.97 L1622.60 1158.42 L1623.92 1159.84 L1625.25 1161.25 L1626.60 1162.63 L1627.98 1163.98 L1629.36 1165.31 L1630.77 1166.61 L1632.20 1167.87 L1633.65 1169.11 L1635.12 1170.31 L1636.60 1171.47 L1638.11 1172.60 L1639.64 1173.69 L1641.20 1174.74 L1642.77 1175.75 L1644.37 1176.71 L1646.00 1177.62 L1647.65 1178.49 L1649.32 1179.31 L1651.02 1180.08 L1652.74 1180.79 L1654.49 1181.45 L1656.26 1182.05 L1658.06 1182.59 L1659.89 1183.07 L1661.74 1183.48 L1663.62 1183.83 L1665.53 1184.11 L1667.47 1184.31 L1669.43 1184.45 L1671.42 1184.51 L1673.45 1184.49 L1675.50 1184.40 L1675.5 1745" fill="none" stroke="#000" stroke-width="3"/>
<path d="M2320 397.6 L2145.1 427.4 L2144.45 460.77 L2144.52 462.54 L2144.61 464.31 L2144.73 466.07 L2144.87 467.82 L2145.03 469.58 L2145.21 471.33 L2145.41 473.08 L2145.62 474.82 L2145.86 476.56 L2146.11 478.30 L2146.38 480.04 L2146.67 481.78 L2146.97 483.51 L2147.28 485.24 L2147.60 486.97 L2147.94 488.70 L2148.28 490.42 L2148.64 492.14 L2149.00 493.87 L2149.37 495.59 L2149.75 497.31 L2150.14 499.03 L2150.53 500.75 L2150.92 502.46 L2151.32 504.18 L2151.72 505.90 L2152.13 507.62 L2152.53 509.33 L2152.93 511.05 L2153.33 512.77 L2153.73 514.48 L2154.13 516.20 L2154.53 517.92 L2154.92 519.64 L2155.31 521.36 L2155.70 523.08 L2156.08 524.80 L2156.47 526.52 L2156.85 528.24 L2157.23 529.96 L2157.60 531.68 L2157.98 533.40 L2158.35 535.12 L2158.72 536.84 L2159.09 538.57 L2159.45 540.29 L2159.82 542.01 L2160.18 543.74 L2160.54 545.46 L2160.90 547.19 L2161.26 548.91 L2161.61 550.64 L2161.97 552.36 L2162.32 554.09 L2162.67 555.81 L2163.02 557.54 L2163.37 559.27 L2163.72 560.99 L2164.06 562.72 L2164.41 564.45 L2164.75 566.17 L2165.10 567.90 L2165.44 569.63 L2165.78 571.36 L2166.12 573.08 L2166.46 574.81 L2166.80 576.54 L2167.13 578.27 L2167.47 580.00 L2167.80 581.73 L2168.14 583.45 L2168.47 585.18 L2168.81 586.91 L2169.14 588.64 L2169.47 590.37 L2169.80 592.10 L2170.13 593.83 L2170.46 595.56 L2170.78 597.29 L2171.11 599.02 L2171.43 600.75 L2171.75 602.49 L2172.07 604.22 L2172.39 605.95 L2172.71 607.68 L2173.03 609.41 L2173.34 611.15 L2173.66 612.88 L2173.97 614.61 L2174.28 616.35 L2174.59 618.08 L2174.90 619.81 L2175.20 621.55 L2175.50 623.28 L2175.81 625.02 L2176.11 626.75 L2176.40 628.49 L2176.70 630.22 L2176.99 631.96 L2177.28 633.70 L2177.57 635.43 L2177.86 637.17 L2178.15 638.91 L2178.43 640.65 L2178.71 642.39 L2178.99 644.12 L2179.26 645.86 L2179.54 647.60 L2179.81 649.34 L2180.07 651.08 L2180.34 652.82 L2180.60 654.57 L2180.86 656.31 L2181.12 658.05 L2181.38 659.79 L2181.63 661.54 L2181.88 663.28 L2182.12 665.02 L2182.37 666.77 L2182.61 668.51 L2182.85 670.26 L2183.08 672.01 L2183.31 673.75 L2183.54 675.50 L2183.77 677.25 L2183.99 678.99 L2184.21 680.74 L2184.43 682.49 L2184.65 684.24 L2184.86 685.99 L2185.07 687.74 L2185.27 689.49 L2185.47 691.24 L2185.67 692.99 L2185.87 694.74 L2186.06 696.49 L2186.26 698.25 L2186.44 700.00 L2186.63 701.75 L2186.81 703.50 L2186.99 705.26 L2187.16 707.01 L2187.34 708.77 L2187.51 710.52 L2187.67 712.27 L2187.83 714.03 L2187.99 715.78 L2188.15 717.54 L2188.31 719.30 L2188.46 721.05 L2188.60 722.81 L2188.75 724.56 L2188.89 726.32 L2189.03 728.08 L2189.16 729.84 L2189.29 731.59 L2189.42 733.35 L2189.55 735.11 L2189.67 736.87 L2189.79 738.63 L2189.91 740.38 L2190.02 742.14 L2190.13 743.90 L2190.23 745.66 L2190.34 747.42 L2190.44 749.18 L2190.53 750.94 L2190.63 752.70 L2190.71 754.46 L2190.80 756.22 L2190.88 757.98 L2190.96 759.74 L2191.04 761.50 L2191.11 763.26 L2191.18 765.02 L2191.25 766.78 L2191.31 768.54 L2191.37 770.30 L2191.43 772.06 L2191.48 773.82 L2191.53 775.59 L2191.58 777.35 L2191.62 779.11 L2191.66 780.87 L2191.70 782.63 L2191.73 784.39 L2191.76 786.15 L2191.78 787.91 L2191.81 789.68 L2191.82 791.44 L2191.84 793.20 L2191.85 794.96 L2191.86 796.72 L2191.86 798.48 L2191.87 800.24 L2191.86 802.00 L2191.86 803.77 L2191.85 805.53 L2191.83 807.29 L2191.82 809.05 L2191.80 810.81 L2191.78 812.57 L2191.75 814.33 L2191.72 816.09 L2191.68 817.85 L2191.65 819.61 L2191.60 821.37 L2191.56 823.13 L2191.51 824.89 L2191.46 826.65 L2191.40 828.41 L2191.34 830.17 L2191.28 831.93 L2191.21 833.69 L2191.14 835.45 L2191.07 837.21 L2190.99 838.97 L2190.91 840.73 L2190.82 842.49 L2190.73 844.25 L2190.64 846.01 L2190.54 847.76 L2190.44 849.52 L2190.34 851.28 L2190.23 853.04 L2190.12 854.79 L2190.00 856.55 L2189.88 858.31 L2189.76 860.06 L2189.63 861.82 L2189.50 863.58 L2189.37 865.33 L2189.23 867.09 L2189.09 868.84 L2188.94 870.60 L2188.79 872.35 L2188.64 874.10 L2188.48 875.86 L2188.32 877.61 L2188.15 879.37 L2187.99 881.12 L2187.81 882.87 L2187.64 884.62 L2187.46 886.37 L2187.27 888.13 L2187.08 889.88 L2186.89 891.63 L2186.69 893.38 L2186.49 895.13 L2186.29 896.88 L2186.08 898.63 L2185.87 900.38 L2185.65 902.12 L2185.43 903.87 L2185.21 905.62 L2184.98 907.37 L2184.75 909.11 L2184.52 910.86 L2184.28 912.60 L2184.03 914.35 L2183.79 916.09 L2183.54 917.84 L2183.28 919.58 L2183.02 921.33 L2182.76 923.07 L2182.49 924.81 L2182.22 926.55 L2181.94 928.29 L2181.66 930.03 L2181.38 931.77 L2181.09 933.51 L2180.80 935.25 L2180.51 936.99 L2180.21 938.73 L2179.90 940.47 L2179.60 942.20 L2179.28 943.94 L2178.97 945.67 L2178.65 947.41 L2178.32 949.14 L2178.00 950.88 L2177.66 952.61 L2177.33 954.34 L2176.99 956.08 L2176.64 957.81 L2176.29 959.54 L2175.94 961.27 L2175.58 962.99 L2175.22 964.72 L2174.85 966.45 L2174.48 968.17 L2174.10 969.90 L2173.71 971.62 L2173.32 973.34 L2172.93 975.06 L2172.53 976.78 L2172.12 978.50 L2171.71 980.21 L2171.30 981.92 L2170.87 983.64 L2170.44 985.35 L2170.01 987.05 L2169.57 988.76 L2169.12 990.47 L2168.66 992.17 L2168.20 993.87 L2167.74 995.57 L2167.26 997.26 L2166.78 998.96 L2166.29 1000.65 L2165.80 1002.34 L2165.29 1004.03 L2164.78 1005.71 L2164.27 1007.39 L2163.74 1009.07 L2163.21 1010.75 L2162.67 1012.42 L2162.12 1014.09 L2161.56 1015.76 L2161.00 1017.43 L2160.43 1019.09 L2159.84 1020.75 L2159.26 1022.40 L2158.66 1024.06 L2158.05 1025.71 L2157.44 1027.35 L2156.81 1029.00 L2156.18 1030.64 L2155.54 1032.27 L2154.89 1033.90 L2154.23 1035.53 L2153.56 1037.16 L2152.88 1038.78 L2152.19 1040.40 L2151.49 1042.01 L2150.78 1043.62 L2150.07 1045.23 L2149.34 1046.83 L2148.60 1048.43 L2147.85 1050.02 L2147.09 1051.61 L2146.33 1053.20 L2145.55 1054.78 L2144.76 1056.36 L2143.96 1057.93 L2143.15 1059.49 L2142.33 1061.05 L2141.50 1062.61 L2140.66 1064.16 L2139.81 1065.70 L2138.95 1067.24 L2138.08 1068.78 L2137.19 1070.30 L2136.30 1071.83 L2135.40 1073.34 L2134.48 1074.85 L2133.56 1076.35 L2132.62 1077.85 L2131.68 1079.34 L2130.72 1080.82 L2129.75 1082.29 L2128.77 1083.76 L2127.78 1085.22 L2126.78 1086.67 L2125.77 1088.12 L2124.75 1089.56 L2123.71 1090.99 L2122.67 1092.41 L2121.62 1093.83 L2120.55 1095.24 L2119.48 1096.64 L2118.41 1098.04 L2117.33 1099.44 L2116.24 1100.84 L2115.15 1102.23 L2114.06 1103.62 L2112.96 1105.01 L2111.86 1106.40 L2110.77 1107.79 L2109.67 1109.18 L2108.56 1110.56 L2107.45 1111.94 L2106.32 1113.30 L2105.19 1114.65 L2104.04 1115.98 L2102.87 1117.29 L2101.69 1118.59 L2100.48 1119.85 L2099.25 1121.09 L2097.99 1122.30 L2096.70 1123.47 L2095.39 1124.61 L2094.04 1125.70 L2092.65 1126.76 L2091.22 1127.77 L2089.76 1128.73 L2088.25 1129.64 L2086.70 1130.50 L2044.5 1130.5 L2044.5 1745" fill="none" stroke="#000" stroke-width="3" stroke-linejoin="miter"/>
<path d="M2320 429.2 L2175.9 453.8 L2175.91 455.71 L2176.13 457.61 L2176.36 459.52 L2176.60 461.42 L2176.85 463.32 L2177.11 465.22 L2177.38 467.12 L2177.65 469.02 L2177.94 470.92 L2178.23 472.82 L2178.53 474.71 L2178.84 476.61 L2179.15 478.50 L2179.47 480.39 L2179.80 482.28 L2180.13 484.17 L2180.47 486.06 L2180.82 487.95 L2181.17 489.84 L2181.52 491.73 L2181.88 493.62 L2182.25 495.50 L2182.62 497.39 L2182.99 499.27 L2183.37 501.16 L2183.75 503.04 L2184.14 504.92 L2184.53 506.81 L2184.92 508.69 L2185.31 510.57 L2185.71 512.45 L2186.11 514.34 L2186.51 516.22 L2186.91 518.10 L2187.31 519.98 L2187.71 521.86 L2188.12 523.74 L2188.52 525.62 L2188.93 527.50 L2189.33 529.38 L2189.74 531.26 L2190.14 533.14 L2190.54 535.02 L2190.94 536.90 L2191.34 538.78 L2191.74 540.67 L2192.14 542.55 L2192.53 544.43 L2192.92 546.31 L2193.31 548.19 L2193.70 550.07 L2194.08 551.96 L2194.46 553.84 L2194.84 555.72 L2195.22 557.61 L2195.59 559.49 L2195.96 561.37 L2196.33 563.26 L2196.69 565.14 L2197.06 567.03 L2197.42 568.91 L2197.78 570.80 L2198.13 572.69 L2198.49 574.57 L2198.84 576.46 L2199.19 578.35 L2199.53 580.23 L2199.88 582.12 L2200.22 584.01 L2200.56 585.90 L2200.90 587.79 L2201.23 589.68 L2201.57 591.57 L2201.90 593.46 L2202.23 595.35 L2202.56 597.24 L2202.88 599.13 L2203.21 601.02 L2203.53 602.91 L2203.85 604.80 L2204.17 606.70 L2204.48 608.59 L2204.80 610.48 L2205.11 612.38 L2205.42 614.27 L2205.73 616.16 L2206.04 618.06 L2206.34 619.95 L2206.65 621.85 L2206.95 623.75 L2207.25 625.64 L2207.55 627.54 L2207.84 629.44 L2208.14 631.34 L2208.43 633.23 L2208.73 635.13 L2209.02 637.03 L2209.31 638.93 L2209.60 640.83 L2209.88 642.73 L2210.17 644.63 L2210.45 646.53 L2210.73 648.43 L2211.01 650.34 L2211.28 652.24 L2211.56 654.14 L2211.83 656.04 L2212.10 657.95 L2212.37 659.85 L2212.64 661.76 L2212.91 663.66 L2213.17 665.57 L2213.43 667.47 L2213.69 669.38 L2213.94 671.28 L2214.20 673.19 L2214.45 675.09 L2214.70 677.00 L2214.94 678.91 L2215.19 680.82 L2215.43 682.72 L2215.67 684.63 L2215.91 686.54 L2216.14 688.45 L2216.37 690.36 L2216.60 692.27 L2216.83 694.18 L2217.05 696.09 L2217.27 698.00 L2217.49 699.91 L2217.70 701.82 L2217.91 703.73 L2218.12 705.64 L2218.33 707.55 L2218.53 709.46 L2218.73 711.38 L2218.93 713.29 L2219.12 715.20 L2219.31 717.11 L2219.50 719.03 L2219.68 720.94 L2219.86 722.85 L2220.04 724.77 L2220.21 726.68 L2220.38 728.59 L2220.55 730.51 L2220.71 732.42 L2220.87 734.34 L2221.03 736.25 L2221.18 738.17 L2221.33 740.08 L2221.48 742.00 L2221.62 743.91 L2221.76 745.83 L2221.89 747.74 L2222.02 749.66 L2222.15 751.58 L2222.27 753.49 L2222.39 755.41 L2222.51 757.32 L2222.62 759.24 L2222.73 761.16 L2222.83 763.07 L2222.93 764.99 L2223.02 766.91 L2223.11 768.83 L2223.20 770.74 L2223.28 772.66 L2223.36 774.58 L2223.43 776.50 L2223.50 778.41 L2223.57 780.33 L2223.63 782.25 L2223.68 784.17 L2223.73 786.09 L2223.78 788.00 L2223.82 789.92 L2223.86 791.84 L2223.89 793.76 L2223.92 795.68 L2223.94 797.60 L2223.96 799.52 L2223.97 801.43 L2223.98 803.35 L2223.99 805.27 L2223.98 807.19 L2223.98 809.11 L2223.97 811.03 L2223.95 812.95 L2223.93 814.86 L2223.90 816.78 L2223.87 818.70 L2223.83 820.62 L2223.79 822.54 L2223.74 824.46 L2223.69 826.38 L2223.63 828.30 L2223.57 830.21 L2223.50 832.13 L2223.43 834.05 L2223.35 835.97 L2223.26 837.89 L2223.17 839.81 L2223.07 841.73 L2222.97 843.64 L2222.86 845.56 L2222.75 847.48 L2222.63 849.40 L2222.50 851.32 L2222.37 853.24 L2222.24 855.15 L2222.09 857.07 L2221.94 858.99 L2221.79 860.91 L2221.63 862.82 L2221.46 864.74 L2221.29 866.66 L2221.12 868.58 L2220.94 870.49 L2220.75 872.41 L2220.56 874.33 L2220.37 876.24 L2220.17 878.16 L2219.96 880.07 L2219.75 881.99 L2219.54 883.90 L2219.32 885.81 L2219.10 887.73 L2218.88 889.64 L2218.65 891.55 L2218.42 893.47 L2218.19 895.38 L2217.95 897.29 L2217.71 899.20 L2217.46 901.11 L2217.22 903.02 L2216.97 904.92 L2216.72 906.83 L2216.46 908.74 L2216.20 910.64 L2215.94 912.55 L2215.68 914.45 L2215.42 916.36 L2215.16 918.26 L2214.89 920.16 L2214.62 922.06 L2214.35 923.96 L2214.08 925.86 L2213.80 927.76 L2213.52 929.66 L2213.24 931.55 L2212.95 933.45 L2212.65 935.34 L2212.35 937.23 L2212.05 939.12 L2211.73 941.01 L2211.41 942.90 L2211.08 944.79 L2210.75 946.67 L2210.40 948.55 L2210.05 950.43 L2209.68 952.31 L2209.31 954.19 L2208.92 956.06 L2208.53 957.93 L2208.12 959.80 L2207.71 961.67 L2207.29 963.54 L2206.86 965.41 L2206.43 967.28 L2205.99 969.14 L2205.54 971.01 L2205.09 972.87 L2204.63 974.73 L2204.17 976.60 L2203.70 978.46 L2203.22 980.32 L2202.75 982.19 L2202.27 984.05 L2201.79 985.91 L2201.30 987.77 L2200.81 989.64 L2200.32 991.50 L2199.82 993.36 L2199.32 995.22 L2198.81 997.09 L2198.30 998.95 L2197.79 1000.81 L2197.27 1002.67 L2196.75 1004.52 L2196.22 1006.38 L2195.68 1008.23 L2195.15 1010.09 L2194.60 1011.94 L2194.05 1013.79 L2193.49 1015.63 L2192.93 1017.48 L2192.36 1019.32 L2191.79 1021.16 L2191.21 1023.00 L2190.62 1024.83 L2190.02 1026.67 L2189.42 1028.49 L2188.81 1030.32 L2188.19 1032.14 L2187.57 1033.96 L2186.93 1035.78 L2186.29 1037.59 L2185.64 1039.40 L2184.99 1041.20 L2184.32 1043.00 L2183.64 1044.80 L2182.96 1046.59 L2182.27 1048.37 L2181.57 1050.16 L2180.85 1051.93 L2180.13 1053.71 L2179.40 1055.47 L2178.66 1057.23 L2177.90 1058.99 L2177.14 1060.74 L2176.36 1062.49 L2175.58 1064.23 L2174.77 1065.96 L2173.96 1067.69 L2173.14 1069.41 L2172.30 1071.12 L2171.44 1072.83 L2170.58 1074.53 L2169.70 1076.23 L2168.80 1077.91 L2167.89 1079.60 L2166.97 1081.27 L2166.03 1082.94 L2165.08 1084.60 L2164.11 1086.25 L2163.12 1087.89 L2162.13 1089.53 L2161.12 1091.16 L2160.09 1092.78 L2159.05 1094.40 L2158.00 1096.00 L2156.93 1097.60 L2155.85 1099.19 L2154.76 1100.78 L2153.65 1102.35 L2152.53 1103.92 L2151.40 1105.48 L2150.25 1107.03 L2149.10 1108.57 L2147.93 1110.11 L2146.74 1111.64 L2145.55 1113.15 L2144.34 1114.67 L2143.13 1116.17 L2141.90 1117.66 L2140.66 1119.15 L2139.41 1120.62 L2138.14 1122.09 L2136.87 1123.55 L2135.58 1125.00 L2134.29 1126.44 L2132.98 1127.88 L2131.66 1129.30 L2130.34 1130.71 L2129.00 1132.12 L2127.65 1133.52 L2126.30 1134.91 L2124.93 1136.28 L2123.56 1137.65 L2122.17 1139.01 L2120.78 1140.36 L2119.37 1141.70 L2117.95 1143.01 L2116.52 1144.31 L2115.07 1145.58 L2113.61 1146.83 L2112.13 1148.04 L2110.64 1149.23 L2109.12 1150.37 L2107.59 1151.48 L2106.04 1152.55 L2104.46 1153.58 L2102.86 1154.56 L2101.24 1155.49 L2099.60 1156.36 L2097.92 1157.18 L2096.23 1157.94 L2094.50 1158.64 L2092.75 1159.28 L2090.96 1159.84 L2089.15 1160.34 L2087.30 1160.76 L2085.42 1161.11 L2083.51 1161.38 L2081.56 1161.56 L2079.58 1161.67 L2077.56 1161.68 L2075.50 1161.60 L2075.5 1745" fill="none" stroke="#000" stroke-width="3"/>
<path d="M1572.6 445 L1572.6 461.3" stroke="#000" stroke-width="3"/>
<path d="M1590 477.5 L1605.9 482" stroke="#000" stroke-width="3"/>
<path d="M1675.5 1153.5 L1675.5 1169.3" stroke="#000" stroke-width="3"/>
<path d="M1689.7 1184.5 L1706.5 1184.5" stroke="#000" stroke-width="3"/>
<path d="M2176.2 423 L2176.2 438.3" stroke="#000" stroke-width="3"/>
<path d="M2144.4 459 L2161.4 456.7" stroke="#000" stroke-width="3"/>
<path d="M2075.5 1130.5 L2075.5 1146.8" stroke="#000" stroke-width="3"/>
<path d="M2044.5 1161.5 L2059.7 1161.5" stroke="#000" stroke-width="3"/>
<circle cx="782.5" cy="446.2" r="6.5" fill="#000"/>
<circle cx="1054.9" cy="384.3" r="6.5" fill="#000"/>
<circle cx="1574.2" cy="476.1" r="6.5" fill="#000"/>
<circle cx="1675.5" cy="1184.4" r="6.5" fill="#000"/>
<circle cx="2175.7" cy="453.8" r="6.5" fill="#000"/>
<circle cx="2075.5" cy="1161.6" r="6.5" fill="#000"/>
<path d="M1226 1027 V1745" stroke="#000" stroke-width="2"/>
<path d="M1226 1005.5 L1234.5 1028.7 L1217.4 1028.7 Z" fill="#000"/>
</g></svg>
</body></html>
